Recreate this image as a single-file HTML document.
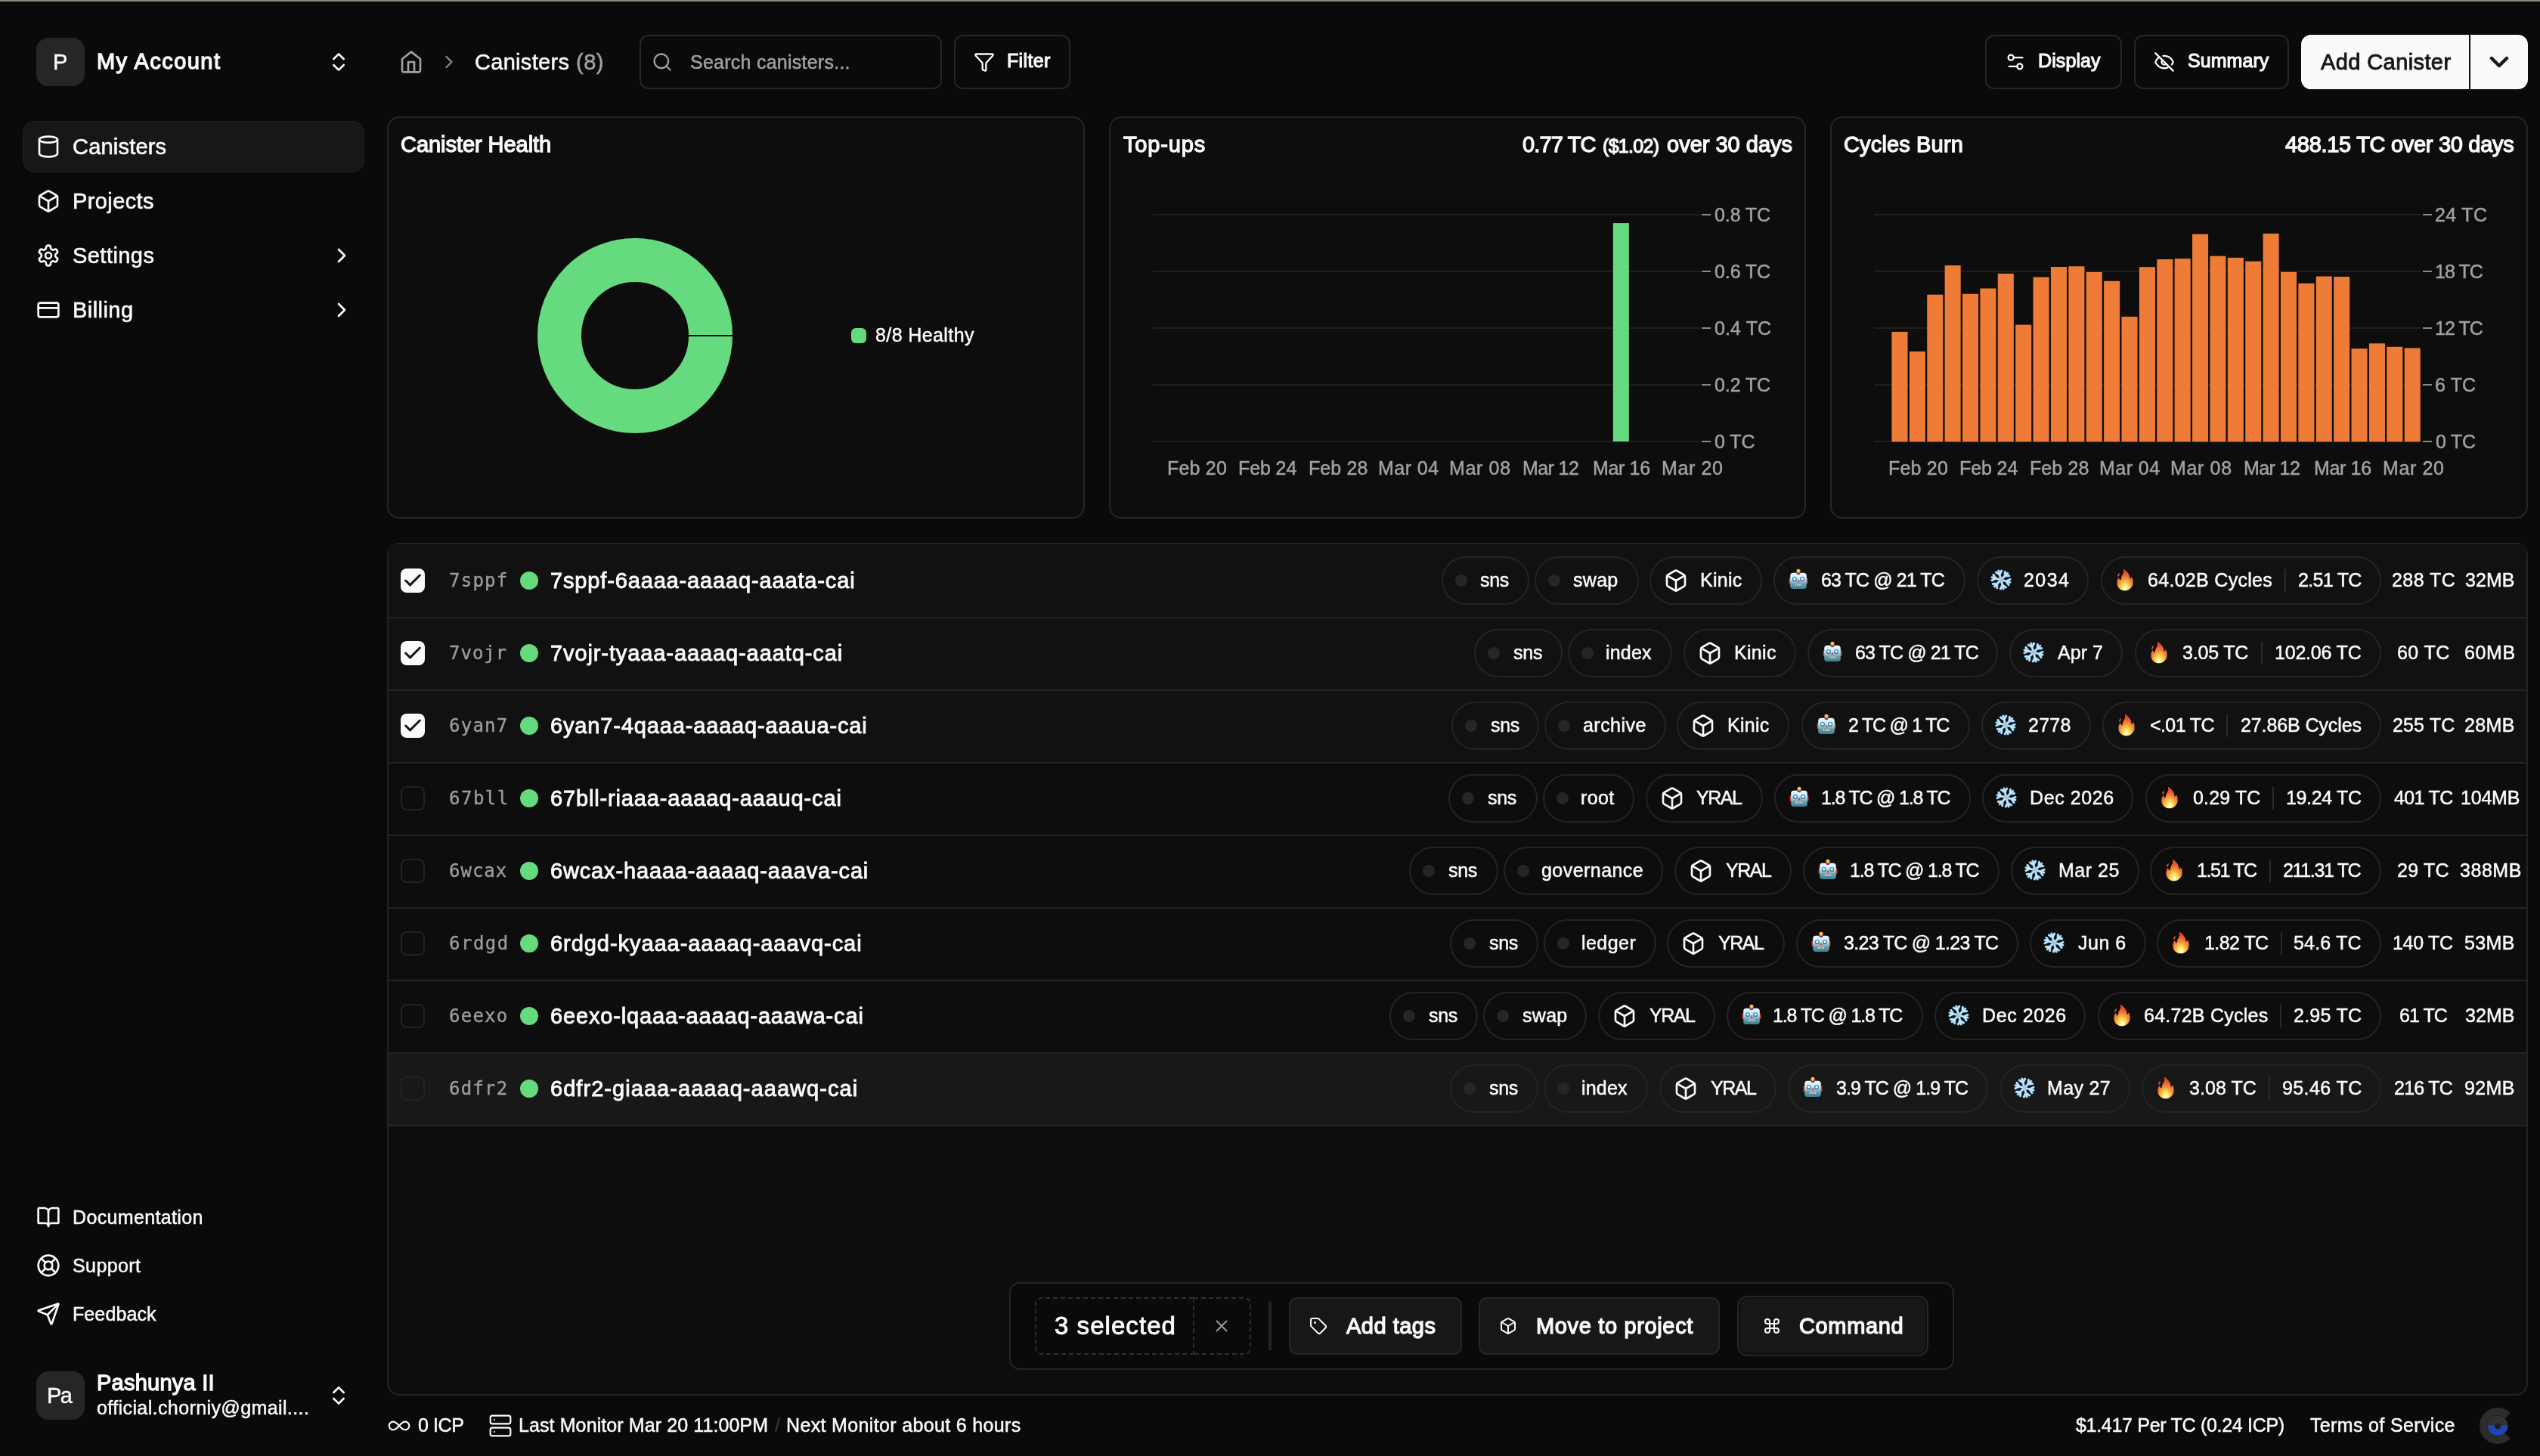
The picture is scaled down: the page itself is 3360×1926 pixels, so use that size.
<!DOCTYPE html>
<html lang="en"><head><meta charset="utf-8"><title>Canisters</title><style>
*{box-sizing:border-box;margin:0;padding:0}
html,body{width:3360px;height:1926px;overflow:hidden;background:#0a0a0a}
body{position:relative;font-family:'Liberation Sans',sans-serif;color:#fafafa}
.b,.i,.t,.s{position:absolute}
.tl{position:absolute;left:0;top:0;width:3360px;height:1926px;will-change:transform}
.t{white-space:pre;font-weight:400}
.m{font-family:'DejaVu Sans Mono','Liberation Mono',monospace}
.bd{font-weight:700}
@media (min-resolution:1.9dppx){html{zoom:.5}}
</style></head>
<body>
<svg class="i" style="left:0;top:0" width="0" height="0" aria-hidden="true"><defs><linearGradient id="rg" x1="0" y1="0" x2="0" y2="1"><stop offset="0" stop-color="#eaf7f9"/><stop offset=".38" stop-color="#d5ecef"/><stop offset=".68" stop-color="#6aa2ae"/><stop offset="1" stop-color="#3a7d93"/></linearGradient><linearGradient id="eg" x1="0" y1="0" x2="0" y2="1"><stop offset="0" stop-color="#3fb0e6"/><stop offset="1" stop-color="#2b74aa"/></linearGradient><radialGradient id="ag" cx=".5" cy=".35" r=".7"><stop offset="0" stop-color="#ffd862"/><stop offset="1" stop-color="#ef9422"/></radialGradient><radialGradient id="fg" cx=".5" cy=".86" r=".8" fx=".5" fy=".9"><stop offset="0" stop-color="#fffdf0"/><stop offset=".14" stop-color="#fff3a0"/><stop offset=".3" stop-color="#fbd64c"/><stop offset=".52" stop-color="#f29a3e"/><stop offset=".78" stop-color="#ee5a2c"/><stop offset="1" stop-color="#e8412a"/></radialGradient></defs></svg>
<div class="b" style="left:0px;top:0px;width:3360px;height:2px;background:#858a7a;"></div>
<div class="b" style="left:48px;top:50px;width:64px;height:64px;background:#262626;border-radius:16px;"></div>
<svg class="i" style="left:432px;top:66px" width="32" height="32" viewBox="0 0 24 24" fill="none" stroke="#fafafa" stroke-width="2" stroke-linecap="round" stroke-linejoin="round" ><path d="m7 15 5 5 5-5"/><path d="m7 9 5-5 5 5"/></svg>
<div class="b" style="left:30px;top:160px;width:452px;height:68px;background:#171717;border-radius:16px;box-shadow:inset 0 0 0 2px #1c1c1c;"></div>
<svg class="i" style="left:48px;top:178px" width="32" height="32" viewBox="0 0 24 24" fill="none" stroke="#fafafa" stroke-width="2" stroke-linecap="round" stroke-linejoin="round" ><ellipse cx="12" cy="5" rx="9" ry="3"/><path d="M3 5v14a9 3 0 0 0 18 0V5"/></svg>
<svg class="i" style="left:48px;top:250px" width="32" height="32" viewBox="0 0 24 24" fill="none" stroke="#fafafa" stroke-width="2" stroke-linecap="round" stroke-linejoin="round" ><path d="M21 8a2 2 0 0 0-1-1.73l-7-4a2 2 0 0 0-2 0l-7 4A2 2 0 0 0 3 8v8a2 2 0 0 0 1 1.73l7 4a2 2 0 0 0 2 0l7-4A2 2 0 0 0 21 16Z"/><path d="m3.3 7 8.7 5 8.7-5"/><path d="M12 22V12"/></svg>
<svg class="i" style="left:48px;top:322px" width="32" height="32" viewBox="0 0 24 24" fill="none" stroke="#fafafa" stroke-width="2" stroke-linecap="round" stroke-linejoin="round" ><path d="M12.22 2h-.44a2 2 0 0 0-2 2v.18a2 2 0 0 1-1 1.73l-.43.25a2 2 0 0 1-2 0l-.15-.08a2 2 0 0 0-2.73.73l-.22.38a2 2 0 0 0 .73 2.73l.15.1a2 2 0 0 1 1 1.72v.51a2 2 0 0 1-1 1.74l-.15.09a2 2 0 0 0-.73 2.73l.22.38a2 2 0 0 0 2.73.73l.15-.08a2 2 0 0 1 2 0l.43.25a2 2 0 0 1 1 1.73V20a2 2 0 0 0 2 2h.44a2 2 0 0 0 2-2v-.18a2 2 0 0 1 1-1.73l.43-.25a2 2 0 0 1 2 0l.15.08a2 2 0 0 0 2.73-.73l.22-.39a2 2 0 0 0-.73-2.73l-.15-.08a2 2 0 0 1-1-1.74v-.5a2 2 0 0 1 1-1.74l.15-.09a2 2 0 0 0 .73-2.73l-.22-.38a2 2 0 0 0-2.73-.73l-.15.08a2 2 0 0 1-2 0l-.43-.25a2 2 0 0 1-1-1.73V4a2 2 0 0 0-2-2z"/><circle cx="12" cy="12" r="3"/></svg>
<svg class="i" style="left:436px;top:322px" width="32" height="32" viewBox="0 0 24 24" fill="none" stroke="#fafafa" stroke-width="2" stroke-linecap="round" stroke-linejoin="round" ><path d="m9 18 6-6-6-6"/></svg>
<svg class="i" style="left:48px;top:394px" width="32" height="32" viewBox="0 0 24 24" fill="none" stroke="#fafafa" stroke-width="2" stroke-linecap="round" stroke-linejoin="round" ><rect width="20" height="14" x="2" y="5" rx="2"/><line x1="2" x2="22" y1="10" y2="10"/></svg>
<svg class="i" style="left:436px;top:394px" width="32" height="32" viewBox="0 0 24 24" fill="none" stroke="#fafafa" stroke-width="2" stroke-linecap="round" stroke-linejoin="round" ><path d="m9 18 6-6-6-6"/></svg>
<svg class="i" style="left:48px;top:1594px" width="32" height="32" viewBox="0 0 24 24" fill="none" stroke="#fafafa" stroke-width="2" stroke-linecap="round" stroke-linejoin="round" ><path d="M12 7v14"/><path d="M3 18a1 1 0 0 1-1-1V4a1 1 0 0 1 1-1h5a4 4 0 0 1 4 4 4 4 0 0 1 4-4h5a1 1 0 0 1 1 1v13a1 1 0 0 1-1 1h-6a3 3 0 0 0-3 3 3 3 0 0 0-3-3z"/></svg>
<svg class="i" style="left:48px;top:1658px" width="32" height="32" viewBox="0 0 24 24" fill="none" stroke="#fafafa" stroke-width="2" stroke-linecap="round" stroke-linejoin="round" ><circle cx="12" cy="12" r="10"/><path d="m4.93 4.93 4.24 4.24"/><path d="m14.83 9.17 4.24-4.24"/><path d="m14.83 14.83 4.24 4.24"/><path d="m9.17 14.83-4.24 4.24"/><circle cx="12" cy="12" r="4"/></svg>
<svg class="i" style="left:48px;top:1722px" width="32" height="32" viewBox="0 0 24 24" fill="none" stroke="#fafafa" stroke-width="2" stroke-linecap="round" stroke-linejoin="round" ><path d="M14.536 21.686a.5.5 0 0 0 .937-.024l6.5-19a.496.496 0 0 0-.635-.635l-19 6.5a.5.5 0 0 0-.024.937l7.93 3.18a2 2 0 0 1 1.112 1.11z"/><path d="m21.854 2.147-10.94 10.939"/></svg>
<div class="b" style="left:48px;top:1814px;width:64px;height:64px;background:#262626;border-radius:16px;"></div>
<svg class="i" style="left:432px;top:1830px" width="32" height="32" viewBox="0 0 24 24" fill="none" stroke="#fafafa" stroke-width="2" stroke-linecap="round" stroke-linejoin="round" ><path d="m7 15 5 5 5-5"/><path d="m7 9 5-5 5 5"/></svg>
<svg class="i" style="left:528px;top:66px" width="32" height="32" viewBox="0 0 24 24" fill="none" stroke="#a1a1a1" stroke-width="2" stroke-linecap="round" stroke-linejoin="round" ><path d="m3 9 9-7 9 7v11a2 2 0 0 1-2 2H5a2 2 0 0 1-2-2z"/><polyline points="9 22 9 12 15 12 15 22"/></svg>
<svg class="i" style="left:580px;top:68px" width="28" height="28" viewBox="0 0 24 24" fill="none" stroke="#8a8a8a" stroke-width="2" stroke-linecap="round" stroke-linejoin="round" ><path d="m9 18 6-6-6-6"/></svg>
<div class="b" style="left:846px;top:46px;width:400px;height:72px;border:2px solid #262626;border-radius:12px;"></div>
<svg class="i" style="left:862px;top:68px" width="28" height="28" viewBox="0 0 24 24" fill="none" stroke="#a1a1a1" stroke-width="2" stroke-linecap="round" stroke-linejoin="round" ><circle cx="11" cy="11" r="8"/><path d="m21 21-4.3-4.3"/></svg>
<div class="b" style="left:1262px;top:46px;width:154px;height:72px;border:2px solid #262626;border-radius:12px;"></div>
<svg class="i" style="left:1288px;top:68px" width="28" height="28" viewBox="0 0 24 24" fill="none" stroke="#fafafa" stroke-width="2" stroke-linecap="round" stroke-linejoin="round" ><path d="M10 20a1 1 0 0 0 .553.895l2 1A1 1 0 0 0 14 21v-7a2 2 0 0 1 .517-1.341L21.74 4.67A1 1 0 0 0 21 3H3a1 1 0 0 0-.742 1.67l7.225 7.989A2 2 0 0 1 10 14z"/></svg>
<div class="b" style="left:2626px;top:46px;width:181px;height:72px;border:2px solid #262626;border-radius:12px;"></div>
<svg class="i" style="left:2652px;top:68px" width="28" height="28" viewBox="0 0 24 24" fill="none" stroke="#fafafa" stroke-width="2" stroke-linecap="round" stroke-linejoin="round" ><path d="M20 7h-9"/><path d="M14 17H5"/><circle cx="17" cy="17" r="3"/><circle cx="7" cy="7" r="3"/></svg>
<div class="b" style="left:2823px;top:46px;width:205px;height:72px;border:2px solid #262626;border-radius:12px;"></div>
<svg class="i" style="left:2849px;top:68px" width="28" height="28" viewBox="0 0 24 24" fill="none" stroke="#fafafa" stroke-width="2" stroke-linecap="round" stroke-linejoin="round" ><path d="M10.733 5.076a10.744 10.744 0 0 1 11.205 6.575 1 1 0 0 1 0 .696 10.747 10.747 0 0 1-1.444 2.49"/><path d="M14.084 14.158a3 3 0 0 1-4.242-4.242"/><path d="M17.479 17.499a10.75 10.75 0 0 1-15.417-5.151 1 1 0 0 1 0-.696 10.75 10.75 0 0 1 4.446-5.143"/><path d="m2 2 20 20"/></svg>
<div class="b" style="left:3044px;top:46px;width:222px;height:72px;background:#fafafa;border-radius:13px 0 0 13px;"></div>
<div class="b" style="left:3268px;top:46px;width:76px;height:72px;background:#fafafa;border-radius:0 13px 13px 0;"></div>
<svg class="i" style="left:3286px;top:62px" width="40" height="40" viewBox="0 0 40 40" fill="none" stroke="#171717" stroke-width="4.4" stroke-linecap="round" stroke-linejoin="round"><path d="M10 15 L20 25 L30 15"/></svg>
<div class="b" style="left:512px;top:154px;width:923px;height:532px;background:#0d0d0d;border:2px solid #262626;border-radius:16px;"></div>
<div class="b" style="left:1467px;top:154px;width:922px;height:532px;background:#0d0d0d;border:2px solid #262626;border-radius:16px;"></div>
<div class="b" style="left:2421px;top:154px;width:923px;height:532px;background:#0d0d0d;border:2px solid #262626;border-radius:16px;"></div>
<svg class="i" style="left:700px;top:304px" width="280" height="280" viewBox="-140 -140 280 280">
<circle cx="0" cy="0" r="100" fill="none" stroke="#66da7e" stroke-width="58"/>
<rect x="70" y="-1" width="60" height="2" fill="#0d0d0d"/></svg>
<div class="b" style="left:1126px;top:434px;width:20px;height:20px;background:#66da7e;border-radius:6px;"></div>
<div class="b" style="left:1525px;top:283px;width:724px;height:2px;background:#1f1f1f;"></div>
<div class="b" style="left:2251px;top:283px;width:12px;height:2px;background:#8a8a8a;"></div>
<div class="b" style="left:1525px;top:358px;width:724px;height:2px;background:#1f1f1f;"></div>
<div class="b" style="left:2251px;top:358px;width:12px;height:2px;background:#8a8a8a;"></div>
<div class="b" style="left:1525px;top:433px;width:724px;height:2px;background:#1f1f1f;"></div>
<div class="b" style="left:2251px;top:433px;width:12px;height:2px;background:#8a8a8a;"></div>
<div class="b" style="left:1525px;top:508px;width:724px;height:2px;background:#1f1f1f;"></div>
<div class="b" style="left:2251px;top:508px;width:12px;height:2px;background:#8a8a8a;"></div>
<div class="b" style="left:1525px;top:583px;width:724px;height:2px;background:#1f1f1f;"></div>
<div class="b" style="left:2251px;top:583px;width:12px;height:2px;background:#8a8a8a;"></div>
<svg class="i" style="left:1520px;top:270px" width="740" height="320" viewBox="1520 270 740 320" shape-rendering="auto"><rect x="2133.83" y="295.1" width="21.05" height="288.90" fill="#66da7e"/></svg>
<div class="b" style="left:2479px;top:283px;width:724px;height:2px;background:#1f1f1f;"></div>
<div class="b" style="left:3205px;top:283px;width:12px;height:2px;background:#8a8a8a;"></div>
<div class="b" style="left:2479px;top:358px;width:724px;height:2px;background:#1f1f1f;"></div>
<div class="b" style="left:3205px;top:358px;width:12px;height:2px;background:#8a8a8a;"></div>
<div class="b" style="left:2479px;top:433px;width:724px;height:2px;background:#1f1f1f;"></div>
<div class="b" style="left:3205px;top:433px;width:12px;height:2px;background:#8a8a8a;"></div>
<div class="b" style="left:2479px;top:508px;width:724px;height:2px;background:#1f1f1f;"></div>
<div class="b" style="left:3205px;top:508px;width:12px;height:2px;background:#8a8a8a;"></div>
<div class="b" style="left:2479px;top:583px;width:724px;height:2px;background:#1f1f1f;"></div>
<div class="b" style="left:3205px;top:583px;width:12px;height:2px;background:#8a8a8a;"></div>
<svg class="i" style="left:2470px;top:270px" width="750" height="320" viewBox="2470 270 750 320" fill="#ef7c36"><rect x="2502.46" y="438.9" width="21.05" height="145.40"/><rect x="2525.84" y="464.9" width="21.05" height="119.40"/><rect x="2549.23" y="389.7" width="21.05" height="194.60"/><rect x="2572.62" y="351.1" width="21.05" height="233.20"/><rect x="2596.00" y="388.8" width="21.05" height="195.50"/><rect x="2619.39" y="381.5" width="21.05" height="202.80"/><rect x="2642.78" y="362" width="21.05" height="222.30"/><rect x="2666.17" y="429.6" width="21.05" height="154.70"/><rect x="2689.55" y="366.6" width="21.05" height="217.70"/><rect x="2712.94" y="353" width="21.05" height="231.30"/><rect x="2736.33" y="352.3" width="21.05" height="232.00"/><rect x="2759.71" y="360" width="21.05" height="224.30"/><rect x="2783.10" y="371.8" width="21.05" height="212.50"/><rect x="2806.49" y="418.9" width="21.05" height="165.40"/><rect x="2829.88" y="353.2" width="21.05" height="231.10"/><rect x="2853.26" y="343" width="21.05" height="241.30"/><rect x="2876.65" y="342.1" width="21.05" height="242.20"/><rect x="2900.04" y="309.7" width="21.05" height="274.60"/><rect x="2923.42" y="338.7" width="21.05" height="245.60"/><rect x="2946.81" y="340.9" width="21.05" height="243.40"/><rect x="2970.20" y="345.7" width="21.05" height="238.60"/><rect x="2993.59" y="309" width="21.05" height="275.30"/><rect x="3016.97" y="359.8" width="21.05" height="224.50"/><rect x="3040.36" y="374.9" width="21.05" height="209.40"/><rect x="3063.75" y="365.6" width="21.05" height="218.70"/><rect x="3087.13" y="366.1" width="21.05" height="218.20"/><rect x="3110.52" y="461.1" width="21.05" height="123.20"/><rect x="3133.91" y="454.3" width="21.05" height="130.00"/><rect x="3157.30" y="458.8" width="21.05" height="125.50"/><rect x="3180.68" y="460.4" width="21.05" height="123.90"/></svg>
<div class="b" style="left:512px;top:718px;width:2832px;height:1128px;background:#0d0d0d;border:2px solid #232323;border-radius:16px;overflow:hidden;"></div>
<div class="b" style="left:514px;top:720px;width:2828px;height:96px;background:#111111;"></div>
<div class="b" style="left:514px;top:816px;width:2828px;height:96px;background:#111111;"></div>
<div class="b" style="left:514px;top:912px;width:2828px;height:96px;background:#111111;"></div>
<div class="b" style="left:514px;top:1392px;width:2828px;height:96px;background:#181818;"></div>
<div class="b" style="left:514px;top:816px;width:2828px;height:2px;background:#242424;"></div>
<div class="b" style="left:530px;top:752px;width:32px;height:32px;background:#fafafa;border-radius:8px;"></div>
<svg class="i" style="left:532px;top:754px" width="28" height="28" viewBox="0 0 24 24" fill="none" stroke="#171717" stroke-width="2.6" stroke-linecap="round" stroke-linejoin="round"><path d="M20 6 9 17l-5-5"/></svg>
<div class="b" style="left:688px;top:756px;width:24px;height:24px;border-radius:50%;background:#66da7e"></div>
<div class="b" style="left:1907px;top:736px;width:116px;height:64px;border:2px solid #242424;border-radius:32px;"></div>
<div class="b" style="left:1925px;top:760px;width:16px;height:16px;border-radius:50%;background:#262626"></div>
<div class="b" style="left:2030px;top:736px;width:138px;height:64px;border:2px solid #242424;border-radius:32px;"></div>
<div class="b" style="left:2048px;top:760px;width:16px;height:16px;border-radius:50%;background:#262626"></div>
<div class="b" style="left:2182px;top:736px;width:149px;height:64px;border:2px solid #242424;border-radius:32px;"></div>
<svg class="i" style="left:2201px;top:752px" width="32" height="32" viewBox="0 0 24 24" fill="none" stroke="#fafafa" stroke-width="2" stroke-linecap="round" stroke-linejoin="round" ><path d="M21 8a2 2 0 0 0-1-1.73l-7-4a2 2 0 0 0-2 0l-7 4A2 2 0 0 0 3 8v8a2 2 0 0 0 1 1.73l7 4a2 2 0 0 0 2 0l7-4A2 2 0 0 0 21 16Z"/><path d="m3.3 7 8.7 5 8.7-5"/><path d="M12 22V12"/></svg>
<div class="b" style="left:2346px;top:736px;width:254px;height:64px;border:2px solid #242424;border-radius:32px;"></div>
<svg class="i" style="left:2364.7px;top:752px" width="28" height="30" viewBox="0 0 28 30">
<rect x="1.6" y="12.4" width="2.6" height="7.6" rx="1.1" fill="#d63a2c"/><rect x="23.8" y="12.4" width="2.6" height="7.6" rx="1.1" fill="#d63a2c"/>
<rect x="3.2" y="5.8" width="21.6" height="21.2" rx="3.8" fill="url(#rg)"/>
<path d="M11.4 5.2 H16.6 V6.0 A2.6 2.2 0 0 1 11.4 6.0 Z" fill="#6a3c97"/>
<circle cx="14" cy="3.3" r="2.6" fill="url(#ag)"/>
<circle cx="8.9" cy="13.9" r="3.2" fill="url(#eg)"/><circle cx="19.1" cy="13.9" r="3.2" fill="url(#eg)"/>
<circle cx="8.9" cy="13.9" r="1.7" fill="#fff"/><circle cx="19.1" cy="13.9" r="1.7" fill="#fff"/>
<path d="M14 14.2 L16.0 18.2 L12.0 18.2 Z" fill="#db4a4c"/>
<rect x="9.8" y="20.3" width="8.4" height="2.7" rx="1" fill="#e4e4e4"/>
<path d="M11.5 20.3v2.7M13.2 20.3v2.7M14.9 20.3v2.7M16.6 20.3v2.7" stroke="#5c5c5c" stroke-width=".7"/>
</svg>
<div class="b" style="left:2615px;top:736px;width:148px;height:64px;border:2px solid #242424;border-radius:32px;"></div>
<svg class="i" style="left:2632.6px;top:753px" width="28" height="28" viewBox="0 0 28 28">
<path d="M14 14L25.88 17.18M20.95 15.86L25.94 13.32M20.95 15.86L24.00 20.56M14 14L17.18 25.88M15.86 20.95L20.56 24.00M15.86 20.95L13.32 25.94M14 14L5.30 22.70M8.91 19.09L8.62 24.68M8.91 19.09L3.32 19.38M14 14L2.12 10.82M7.05 12.14L2.06 14.68M7.05 12.14L4.00 7.44M14 14L10.82 2.12M12.14 7.05L7.44 4.00M12.14 7.05L14.68 2.06M14 14L22.70 5.30M19.09 8.91L19.38 3.32M19.09 8.91L24.68 8.62" stroke="#8cc6f0" stroke-width="3.2" stroke-linecap="round" fill="none"/>
<path d="M14 14L25.88 17.18M20.95 15.86L25.94 13.32M20.95 15.86L24.00 20.56M14 14L17.18 25.88M15.86 20.95L20.56 24.00M15.86 20.95L13.32 25.94M14 14L5.30 22.70M8.91 19.09L8.62 24.68M8.91 19.09L3.32 19.38M14 14L2.12 10.82M7.05 12.14L2.06 14.68M7.05 12.14L4.00 7.44M14 14L10.82 2.12M12.14 7.05L7.44 4.00M12.14 7.05L14.68 2.06M14 14L22.70 5.30M19.09 8.91L19.38 3.32M19.09 8.91L24.68 8.62" stroke="#c4e9fb" stroke-width="1.7" stroke-linecap="round" fill="none"/>
<circle cx="14" cy="14" r="2.2" fill="#b5bfc8"/></svg>
<div class="b" style="left:2779px;top:736px;width:371px;height:64px;border:2px solid #242424;border-radius:32px;"></div>
<svg class="i" style="left:2799.2px;top:752px" width="24" height="31" viewBox="0 0 25 31" preserveAspectRatio="none">
<path d="M11.0 1.0 C11.6 1.2 13.5 2.6 15.6 4.8 C18.3 7.6 19.3 10.6 19.2 13.4 C19.7 13.9 20.6 13.4 21.3 12.0 C21.6 11.4 22.2 11.5 22.5 12.2 C23.4 14.3 23.9 16.6 23.6 19.4 C23.1 24.5 18.7 29.2 12.6 29.3 C6.6 29.4 2.0 25.4 1.5 20.2 C1.2 17.0 2.1 14.3 3.4 12.6 C3.8 12.1 4.4 12.3 4.5 12.9 C4.7 14.0 5.2 15.0 6.0 15.3 C6.8 15.3 7.0 14.4 7.2 13.4 C7.7 10.2 9.0 8.0 10.2 6.4 C11.0 5.2 10.6 2.8 10.3 1.6 C10.2 1.2 10.6 0.9 11.0 1.0 Z" fill="url(#fg)"/>
<path d="M4.6 6.0 C5.2 7.3 4.8 9.2 3.5 10.6 C2.6 11.0 2.0 10.4 2.3 9.4 C2.8 7.9 3.7 6.6 4.6 6.0 Z" fill="#ee5b32"/>
</svg>
<div class="b" style="left:3022px;top:753px;width:2px;height:30px;background:#2a2a2a;"></div>
<div class="b" style="left:514px;top:912px;width:2828px;height:2px;background:#242424;"></div>
<div class="b" style="left:530px;top:848px;width:32px;height:32px;background:#fafafa;border-radius:8px;"></div>
<svg class="i" style="left:532px;top:850px" width="28" height="28" viewBox="0 0 24 24" fill="none" stroke="#171717" stroke-width="2.6" stroke-linecap="round" stroke-linejoin="round"><path d="M20 6 9 17l-5-5"/></svg>
<div class="b" style="left:688px;top:852px;width:24px;height:24px;border-radius:50%;background:#66da7e"></div>
<div class="b" style="left:1950px;top:832px;width:117px;height:64px;border:2px solid #242424;border-radius:32px;"></div>
<div class="b" style="left:1968px;top:856px;width:16px;height:16px;border-radius:50%;background:#262626"></div>
<div class="b" style="left:2074px;top:832px;width:138px;height:64px;border:2px solid #242424;border-radius:32px;"></div>
<div class="b" style="left:2092px;top:856px;width:16px;height:16px;border-radius:50%;background:#262626"></div>
<div class="b" style="left:2227px;top:832px;width:149px;height:64px;border:2px solid #242424;border-radius:32px;"></div>
<svg class="i" style="left:2246px;top:848px" width="32" height="32" viewBox="0 0 24 24" fill="none" stroke="#fafafa" stroke-width="2" stroke-linecap="round" stroke-linejoin="round" ><path d="M21 8a2 2 0 0 0-1-1.73l-7-4a2 2 0 0 0-2 0l-7 4A2 2 0 0 0 3 8v8a2 2 0 0 0 1 1.73l7 4a2 2 0 0 0 2 0l7-4A2 2 0 0 0 21 16Z"/><path d="m3.3 7 8.7 5 8.7-5"/><path d="M12 22V12"/></svg>
<div class="b" style="left:2391px;top:832px;width:252px;height:64px;border:2px solid #242424;border-radius:32px;"></div>
<svg class="i" style="left:2409.7px;top:848px" width="28" height="30" viewBox="0 0 28 30">
<rect x="1.6" y="12.4" width="2.6" height="7.6" rx="1.1" fill="#d63a2c"/><rect x="23.8" y="12.4" width="2.6" height="7.6" rx="1.1" fill="#d63a2c"/>
<rect x="3.2" y="5.8" width="21.6" height="21.2" rx="3.8" fill="url(#rg)"/>
<path d="M11.4 5.2 H16.6 V6.0 A2.6 2.2 0 0 1 11.4 6.0 Z" fill="#6a3c97"/>
<circle cx="14" cy="3.3" r="2.6" fill="url(#ag)"/>
<circle cx="8.9" cy="13.9" r="3.2" fill="url(#eg)"/><circle cx="19.1" cy="13.9" r="3.2" fill="url(#eg)"/>
<circle cx="8.9" cy="13.9" r="1.7" fill="#fff"/><circle cx="19.1" cy="13.9" r="1.7" fill="#fff"/>
<path d="M14 14.2 L16.0 18.2 L12.0 18.2 Z" fill="#db4a4c"/>
<rect x="9.8" y="20.3" width="8.4" height="2.7" rx="1" fill="#e4e4e4"/>
<path d="M11.5 20.3v2.7M13.2 20.3v2.7M14.9 20.3v2.7M16.6 20.3v2.7" stroke="#5c5c5c" stroke-width=".7"/>
</svg>
<div class="b" style="left:2658px;top:832px;width:150px;height:64px;border:2px solid #242424;border-radius:32px;"></div>
<svg class="i" style="left:2675.6px;top:849px" width="28" height="28" viewBox="0 0 28 28">
<path d="M14 14L25.88 17.18M20.95 15.86L25.94 13.32M20.95 15.86L24.00 20.56M14 14L17.18 25.88M15.86 20.95L20.56 24.00M15.86 20.95L13.32 25.94M14 14L5.30 22.70M8.91 19.09L8.62 24.68M8.91 19.09L3.32 19.38M14 14L2.12 10.82M7.05 12.14L2.06 14.68M7.05 12.14L4.00 7.44M14 14L10.82 2.12M12.14 7.05L7.44 4.00M12.14 7.05L14.68 2.06M14 14L22.70 5.30M19.09 8.91L19.38 3.32M19.09 8.91L24.68 8.62" stroke="#8cc6f0" stroke-width="3.2" stroke-linecap="round" fill="none"/>
<path d="M14 14L25.88 17.18M20.95 15.86L25.94 13.32M20.95 15.86L24.00 20.56M14 14L17.18 25.88M15.86 20.95L20.56 24.00M15.86 20.95L13.32 25.94M14 14L5.30 22.70M8.91 19.09L8.62 24.68M8.91 19.09L3.32 19.38M14 14L2.12 10.82M7.05 12.14L2.06 14.68M7.05 12.14L4.00 7.44M14 14L10.82 2.12M12.14 7.05L7.44 4.00M12.14 7.05L14.68 2.06M14 14L22.70 5.30M19.09 8.91L19.38 3.32M19.09 8.91L24.68 8.62" stroke="#c4e9fb" stroke-width="1.7" stroke-linecap="round" fill="none"/>
<circle cx="14" cy="14" r="2.2" fill="#b5bfc8"/></svg>
<div class="b" style="left:2824px;top:832px;width:326px;height:64px;border:2px solid #242424;border-radius:32px;"></div>
<svg class="i" style="left:2844.2px;top:848px" width="24" height="31" viewBox="0 0 25 31" preserveAspectRatio="none">
<path d="M11.0 1.0 C11.6 1.2 13.5 2.6 15.6 4.8 C18.3 7.6 19.3 10.6 19.2 13.4 C19.7 13.9 20.6 13.4 21.3 12.0 C21.6 11.4 22.2 11.5 22.5 12.2 C23.4 14.3 23.9 16.6 23.6 19.4 C23.1 24.5 18.7 29.2 12.6 29.3 C6.6 29.4 2.0 25.4 1.5 20.2 C1.2 17.0 2.1 14.3 3.4 12.6 C3.8 12.1 4.4 12.3 4.5 12.9 C4.7 14.0 5.2 15.0 6.0 15.3 C6.8 15.3 7.0 14.4 7.2 13.4 C7.7 10.2 9.0 8.0 10.2 6.4 C11.0 5.2 10.6 2.8 10.3 1.6 C10.2 1.2 10.6 0.9 11.0 1.0 Z" fill="url(#fg)"/>
<path d="M4.6 6.0 C5.2 7.3 4.8 9.2 3.5 10.6 C2.6 11.0 2.0 10.4 2.3 9.4 C2.8 7.9 3.7 6.6 4.6 6.0 Z" fill="#ee5b32"/>
</svg>
<div class="b" style="left:2991px;top:849px;width:2px;height:30px;background:#2a2a2a;"></div>
<div class="b" style="left:514px;top:1008px;width:2828px;height:2px;background:#242424;"></div>
<div class="b" style="left:530px;top:944px;width:32px;height:32px;background:#fafafa;border-radius:8px;"></div>
<svg class="i" style="left:532px;top:946px" width="28" height="28" viewBox="0 0 24 24" fill="none" stroke="#171717" stroke-width="2.6" stroke-linecap="round" stroke-linejoin="round"><path d="M20 6 9 17l-5-5"/></svg>
<div class="b" style="left:688px;top:948px;width:24px;height:24px;border-radius:50%;background:#66da7e"></div>
<div class="b" style="left:1920px;top:928px;width:116px;height:64px;border:2px solid #242424;border-radius:32px;"></div>
<div class="b" style="left:1938px;top:952px;width:16px;height:16px;border-radius:50%;background:#262626"></div>
<div class="b" style="left:2043px;top:928px;width:161px;height:64px;border:2px solid #242424;border-radius:32px;"></div>
<div class="b" style="left:2061px;top:952px;width:16px;height:16px;border-radius:50%;background:#262626"></div>
<div class="b" style="left:2218px;top:928px;width:149px;height:64px;border:2px solid #242424;border-radius:32px;"></div>
<svg class="i" style="left:2237px;top:944px" width="32" height="32" viewBox="0 0 24 24" fill="none" stroke="#fafafa" stroke-width="2" stroke-linecap="round" stroke-linejoin="round" ><path d="M21 8a2 2 0 0 0-1-1.73l-7-4a2 2 0 0 0-2 0l-7 4A2 2 0 0 0 3 8v8a2 2 0 0 0 1 1.73l7 4a2 2 0 0 0 2 0l7-4A2 2 0 0 0 21 16Z"/><path d="m3.3 7 8.7 5 8.7-5"/><path d="M12 22V12"/></svg>
<div class="b" style="left:2383px;top:928px;width:223px;height:64px;border:2px solid #242424;border-radius:32px;"></div>
<svg class="i" style="left:2401.7px;top:944px" width="28" height="30" viewBox="0 0 28 30">
<rect x="1.6" y="12.4" width="2.6" height="7.6" rx="1.1" fill="#d63a2c"/><rect x="23.8" y="12.4" width="2.6" height="7.6" rx="1.1" fill="#d63a2c"/>
<rect x="3.2" y="5.8" width="21.6" height="21.2" rx="3.8" fill="url(#rg)"/>
<path d="M11.4 5.2 H16.6 V6.0 A2.6 2.2 0 0 1 11.4 6.0 Z" fill="#6a3c97"/>
<circle cx="14" cy="3.3" r="2.6" fill="url(#ag)"/>
<circle cx="8.9" cy="13.9" r="3.2" fill="url(#eg)"/><circle cx="19.1" cy="13.9" r="3.2" fill="url(#eg)"/>
<circle cx="8.9" cy="13.9" r="1.7" fill="#fff"/><circle cx="19.1" cy="13.9" r="1.7" fill="#fff"/>
<path d="M14 14.2 L16.0 18.2 L12.0 18.2 Z" fill="#db4a4c"/>
<rect x="9.8" y="20.3" width="8.4" height="2.7" rx="1" fill="#e4e4e4"/>
<path d="M11.5 20.3v2.7M13.2 20.3v2.7M14.9 20.3v2.7M16.6 20.3v2.7" stroke="#5c5c5c" stroke-width=".7"/>
</svg>
<div class="b" style="left:2621px;top:928px;width:145px;height:64px;border:2px solid #242424;border-radius:32px;"></div>
<svg class="i" style="left:2638.6px;top:945px" width="28" height="28" viewBox="0 0 28 28">
<path d="M14 14L25.88 17.18M20.95 15.86L25.94 13.32M20.95 15.86L24.00 20.56M14 14L17.18 25.88M15.86 20.95L20.56 24.00M15.86 20.95L13.32 25.94M14 14L5.30 22.70M8.91 19.09L8.62 24.68M8.91 19.09L3.32 19.38M14 14L2.12 10.82M7.05 12.14L2.06 14.68M7.05 12.14L4.00 7.44M14 14L10.82 2.12M12.14 7.05L7.44 4.00M12.14 7.05L14.68 2.06M14 14L22.70 5.30M19.09 8.91L19.38 3.32M19.09 8.91L24.68 8.62" stroke="#8cc6f0" stroke-width="3.2" stroke-linecap="round" fill="none"/>
<path d="M14 14L25.88 17.18M20.95 15.86L25.94 13.32M20.95 15.86L24.00 20.56M14 14L17.18 25.88M15.86 20.95L20.56 24.00M15.86 20.95L13.32 25.94M14 14L5.30 22.70M8.91 19.09L8.62 24.68M8.91 19.09L3.32 19.38M14 14L2.12 10.82M7.05 12.14L2.06 14.68M7.05 12.14L4.00 7.44M14 14L10.82 2.12M12.14 7.05L7.44 4.00M12.14 7.05L14.68 2.06M14 14L22.70 5.30M19.09 8.91L19.38 3.32M19.09 8.91L24.68 8.62" stroke="#c4e9fb" stroke-width="1.7" stroke-linecap="round" fill="none"/>
<circle cx="14" cy="14" r="2.2" fill="#b5bfc8"/></svg>
<div class="b" style="left:2781px;top:928px;width:369px;height:64px;border:2px solid #242424;border-radius:32px;"></div>
<svg class="i" style="left:2801.2px;top:944px" width="24" height="31" viewBox="0 0 25 31" preserveAspectRatio="none">
<path d="M11.0 1.0 C11.6 1.2 13.5 2.6 15.6 4.8 C18.3 7.6 19.3 10.6 19.2 13.4 C19.7 13.9 20.6 13.4 21.3 12.0 C21.6 11.4 22.2 11.5 22.5 12.2 C23.4 14.3 23.9 16.6 23.6 19.4 C23.1 24.5 18.7 29.2 12.6 29.3 C6.6 29.4 2.0 25.4 1.5 20.2 C1.2 17.0 2.1 14.3 3.4 12.6 C3.8 12.1 4.4 12.3 4.5 12.9 C4.7 14.0 5.2 15.0 6.0 15.3 C6.8 15.3 7.0 14.4 7.2 13.4 C7.7 10.2 9.0 8.0 10.2 6.4 C11.0 5.2 10.6 2.8 10.3 1.6 C10.2 1.2 10.6 0.9 11.0 1.0 Z" fill="url(#fg)"/>
<path d="M4.6 6.0 C5.2 7.3 4.8 9.2 3.5 10.6 C2.6 11.0 2.0 10.4 2.3 9.4 C2.8 7.9 3.7 6.6 4.6 6.0 Z" fill="#ee5b32"/>
</svg>
<div class="b" style="left:2945px;top:945px;width:2px;height:30px;background:#2a2a2a;"></div>
<div class="b" style="left:514px;top:1104px;width:2828px;height:2px;background:#242424;"></div>
<div class="b" style="left:530px;top:1040px;width:32px;height:32px;border:2px solid #222222;border-radius:8px;"></div>
<div class="b" style="left:688px;top:1044px;width:24px;height:24px;border-radius:50%;background:#66da7e"></div>
<div class="b" style="left:1916px;top:1024px;width:118px;height:64px;border:2px solid #242424;border-radius:32px;"></div>
<div class="b" style="left:1934px;top:1048px;width:16px;height:16px;border-radius:50%;background:#262626"></div>
<div class="b" style="left:2041px;top:1024px;width:121px;height:64px;border:2px solid #242424;border-radius:32px;"></div>
<div class="b" style="left:2059px;top:1048px;width:16px;height:16px;border-radius:50%;background:#262626"></div>
<div class="b" style="left:2177px;top:1024px;width:155px;height:64px;border:2px solid #242424;border-radius:32px;"></div>
<svg class="i" style="left:2196px;top:1040px" width="32" height="32" viewBox="0 0 24 24" fill="none" stroke="#fafafa" stroke-width="2" stroke-linecap="round" stroke-linejoin="round" ><path d="M21 8a2 2 0 0 0-1-1.73l-7-4a2 2 0 0 0-2 0l-7 4A2 2 0 0 0 3 8v8a2 2 0 0 0 1 1.73l7 4a2 2 0 0 0 2 0l7-4A2 2 0 0 0 21 16Z"/><path d="m3.3 7 8.7 5 8.7-5"/><path d="M12 22V12"/></svg>
<div class="b" style="left:2347px;top:1024px;width:260px;height:64px;border:2px solid #242424;border-radius:32px;"></div>
<svg class="i" style="left:2365.7px;top:1040px" width="28" height="30" viewBox="0 0 28 30">
<rect x="1.6" y="12.4" width="2.6" height="7.6" rx="1.1" fill="#d63a2c"/><rect x="23.8" y="12.4" width="2.6" height="7.6" rx="1.1" fill="#d63a2c"/>
<rect x="3.2" y="5.8" width="21.6" height="21.2" rx="3.8" fill="url(#rg)"/>
<path d="M11.4 5.2 H16.6 V6.0 A2.6 2.2 0 0 1 11.4 6.0 Z" fill="#6a3c97"/>
<circle cx="14" cy="3.3" r="2.6" fill="url(#ag)"/>
<circle cx="8.9" cy="13.9" r="3.2" fill="url(#eg)"/><circle cx="19.1" cy="13.9" r="3.2" fill="url(#eg)"/>
<circle cx="8.9" cy="13.9" r="1.7" fill="#fff"/><circle cx="19.1" cy="13.9" r="1.7" fill="#fff"/>
<path d="M14 14.2 L16.0 18.2 L12.0 18.2 Z" fill="#db4a4c"/>
<rect x="9.8" y="20.3" width="8.4" height="2.7" rx="1" fill="#e4e4e4"/>
<path d="M11.5 20.3v2.7M13.2 20.3v2.7M14.9 20.3v2.7M16.6 20.3v2.7" stroke="#5c5c5c" stroke-width=".7"/>
</svg>
<div class="b" style="left:2622px;top:1024px;width:200px;height:64px;border:2px solid #242424;border-radius:32px;"></div>
<svg class="i" style="left:2639.6px;top:1041px" width="28" height="28" viewBox="0 0 28 28">
<path d="M14 14L25.88 17.18M20.95 15.86L25.94 13.32M20.95 15.86L24.00 20.56M14 14L17.18 25.88M15.86 20.95L20.56 24.00M15.86 20.95L13.32 25.94M14 14L5.30 22.70M8.91 19.09L8.62 24.68M8.91 19.09L3.32 19.38M14 14L2.12 10.82M7.05 12.14L2.06 14.68M7.05 12.14L4.00 7.44M14 14L10.82 2.12M12.14 7.05L7.44 4.00M12.14 7.05L14.68 2.06M14 14L22.70 5.30M19.09 8.91L19.38 3.32M19.09 8.91L24.68 8.62" stroke="#8cc6f0" stroke-width="3.2" stroke-linecap="round" fill="none"/>
<path d="M14 14L25.88 17.18M20.95 15.86L25.94 13.32M20.95 15.86L24.00 20.56M14 14L17.18 25.88M15.86 20.95L20.56 24.00M15.86 20.95L13.32 25.94M14 14L5.30 22.70M8.91 19.09L8.62 24.68M8.91 19.09L3.32 19.38M14 14L2.12 10.82M7.05 12.14L2.06 14.68M7.05 12.14L4.00 7.44M14 14L10.82 2.12M12.14 7.05L7.44 4.00M12.14 7.05L14.68 2.06M14 14L22.70 5.30M19.09 8.91L19.38 3.32M19.09 8.91L24.68 8.62" stroke="#c4e9fb" stroke-width="1.7" stroke-linecap="round" fill="none"/>
<circle cx="14" cy="14" r="2.2" fill="#b5bfc8"/></svg>
<div class="b" style="left:2838px;top:1024px;width:312px;height:64px;border:2px solid #242424;border-radius:32px;"></div>
<svg class="i" style="left:2858.2px;top:1040px" width="24" height="31" viewBox="0 0 25 31" preserveAspectRatio="none">
<path d="M11.0 1.0 C11.6 1.2 13.5 2.6 15.6 4.8 C18.3 7.6 19.3 10.6 19.2 13.4 C19.7 13.9 20.6 13.4 21.3 12.0 C21.6 11.4 22.2 11.5 22.5 12.2 C23.4 14.3 23.9 16.6 23.6 19.4 C23.1 24.5 18.7 29.2 12.6 29.3 C6.6 29.4 2.0 25.4 1.5 20.2 C1.2 17.0 2.1 14.3 3.4 12.6 C3.8 12.1 4.4 12.3 4.5 12.9 C4.7 14.0 5.2 15.0 6.0 15.3 C6.8 15.3 7.0 14.4 7.2 13.4 C7.7 10.2 9.0 8.0 10.2 6.4 C11.0 5.2 10.6 2.8 10.3 1.6 C10.2 1.2 10.6 0.9 11.0 1.0 Z" fill="url(#fg)"/>
<path d="M4.6 6.0 C5.2 7.3 4.8 9.2 3.5 10.6 C2.6 11.0 2.0 10.4 2.3 9.4 C2.8 7.9 3.7 6.6 4.6 6.0 Z" fill="#ee5b32"/>
</svg>
<div class="b" style="left:3006px;top:1041px;width:2px;height:30px;background:#2a2a2a;"></div>
<div class="b" style="left:514px;top:1200px;width:2828px;height:2px;background:#242424;"></div>
<div class="b" style="left:530px;top:1136px;width:32px;height:32px;border:2px solid #222222;border-radius:8px;"></div>
<div class="b" style="left:688px;top:1140px;width:24px;height:24px;border-radius:50%;background:#66da7e"></div>
<div class="b" style="left:1864px;top:1120px;width:118px;height:64px;border:2px solid #242424;border-radius:32px;"></div>
<div class="b" style="left:1882px;top:1144px;width:16px;height:16px;border-radius:50%;background:#262626"></div>
<div class="b" style="left:1989px;top:1120px;width:211px;height:64px;border:2px solid #242424;border-radius:32px;"></div>
<div class="b" style="left:2007px;top:1144px;width:16px;height:16px;border-radius:50%;background:#262626"></div>
<div class="b" style="left:2215px;top:1120px;width:155px;height:64px;border:2px solid #242424;border-radius:32px;"></div>
<svg class="i" style="left:2234px;top:1136px" width="32" height="32" viewBox="0 0 24 24" fill="none" stroke="#fafafa" stroke-width="2" stroke-linecap="round" stroke-linejoin="round" ><path d="M21 8a2 2 0 0 0-1-1.73l-7-4a2 2 0 0 0-2 0l-7 4A2 2 0 0 0 3 8v8a2 2 0 0 0 1 1.73l7 4a2 2 0 0 0 2 0l7-4A2 2 0 0 0 21 16Z"/><path d="m3.3 7 8.7 5 8.7-5"/><path d="M12 22V12"/></svg>
<div class="b" style="left:2385px;top:1120px;width:260px;height:64px;border:2px solid #242424;border-radius:32px;"></div>
<svg class="i" style="left:2403.7px;top:1136px" width="28" height="30" viewBox="0 0 28 30">
<rect x="1.6" y="12.4" width="2.6" height="7.6" rx="1.1" fill="#d63a2c"/><rect x="23.8" y="12.4" width="2.6" height="7.6" rx="1.1" fill="#d63a2c"/>
<rect x="3.2" y="5.8" width="21.6" height="21.2" rx="3.8" fill="url(#rg)"/>
<path d="M11.4 5.2 H16.6 V6.0 A2.6 2.2 0 0 1 11.4 6.0 Z" fill="#6a3c97"/>
<circle cx="14" cy="3.3" r="2.6" fill="url(#ag)"/>
<circle cx="8.9" cy="13.9" r="3.2" fill="url(#eg)"/><circle cx="19.1" cy="13.9" r="3.2" fill="url(#eg)"/>
<circle cx="8.9" cy="13.9" r="1.7" fill="#fff"/><circle cx="19.1" cy="13.9" r="1.7" fill="#fff"/>
<path d="M14 14.2 L16.0 18.2 L12.0 18.2 Z" fill="#db4a4c"/>
<rect x="9.8" y="20.3" width="8.4" height="2.7" rx="1" fill="#e4e4e4"/>
<path d="M11.5 20.3v2.7M13.2 20.3v2.7M14.9 20.3v2.7M16.6 20.3v2.7" stroke="#5c5c5c" stroke-width=".7"/>
</svg>
<div class="b" style="left:2660px;top:1120px;width:170px;height:64px;border:2px solid #242424;border-radius:32px;"></div>
<svg class="i" style="left:2677.6px;top:1137px" width="28" height="28" viewBox="0 0 28 28">
<path d="M14 14L25.88 17.18M20.95 15.86L25.94 13.32M20.95 15.86L24.00 20.56M14 14L17.18 25.88M15.86 20.95L20.56 24.00M15.86 20.95L13.32 25.94M14 14L5.30 22.70M8.91 19.09L8.62 24.68M8.91 19.09L3.32 19.38M14 14L2.12 10.82M7.05 12.14L2.06 14.68M7.05 12.14L4.00 7.44M14 14L10.82 2.12M12.14 7.05L7.44 4.00M12.14 7.05L14.68 2.06M14 14L22.70 5.30M19.09 8.91L19.38 3.32M19.09 8.91L24.68 8.62" stroke="#8cc6f0" stroke-width="3.2" stroke-linecap="round" fill="none"/>
<path d="M14 14L25.88 17.18M20.95 15.86L25.94 13.32M20.95 15.86L24.00 20.56M14 14L17.18 25.88M15.86 20.95L20.56 24.00M15.86 20.95L13.32 25.94M14 14L5.30 22.70M8.91 19.09L8.62 24.68M8.91 19.09L3.32 19.38M14 14L2.12 10.82M7.05 12.14L2.06 14.68M7.05 12.14L4.00 7.44M14 14L10.82 2.12M12.14 7.05L7.44 4.00M12.14 7.05L14.68 2.06M14 14L22.70 5.30M19.09 8.91L19.38 3.32M19.09 8.91L24.68 8.62" stroke="#c4e9fb" stroke-width="1.7" stroke-linecap="round" fill="none"/>
<circle cx="14" cy="14" r="2.2" fill="#b5bfc8"/></svg>
<div class="b" style="left:2844px;top:1120px;width:306px;height:64px;border:2px solid #242424;border-radius:32px;"></div>
<svg class="i" style="left:2864.2px;top:1136px" width="24" height="31" viewBox="0 0 25 31" preserveAspectRatio="none">
<path d="M11.0 1.0 C11.6 1.2 13.5 2.6 15.6 4.8 C18.3 7.6 19.3 10.6 19.2 13.4 C19.7 13.9 20.6 13.4 21.3 12.0 C21.6 11.4 22.2 11.5 22.5 12.2 C23.4 14.3 23.9 16.6 23.6 19.4 C23.1 24.5 18.7 29.2 12.6 29.3 C6.6 29.4 2.0 25.4 1.5 20.2 C1.2 17.0 2.1 14.3 3.4 12.6 C3.8 12.1 4.4 12.3 4.5 12.9 C4.7 14.0 5.2 15.0 6.0 15.3 C6.8 15.3 7.0 14.4 7.2 13.4 C7.7 10.2 9.0 8.0 10.2 6.4 C11.0 5.2 10.6 2.8 10.3 1.6 C10.2 1.2 10.6 0.9 11.0 1.0 Z" fill="url(#fg)"/>
<path d="M4.6 6.0 C5.2 7.3 4.8 9.2 3.5 10.6 C2.6 11.0 2.0 10.4 2.3 9.4 C2.8 7.9 3.7 6.6 4.6 6.0 Z" fill="#ee5b32"/>
</svg>
<div class="b" style="left:3002px;top:1137px;width:2px;height:30px;background:#2a2a2a;"></div>
<div class="b" style="left:514px;top:1296px;width:2828px;height:2px;background:#242424;"></div>
<div class="b" style="left:530px;top:1232px;width:32px;height:32px;border:2px solid #222222;border-radius:8px;"></div>
<div class="b" style="left:688px;top:1236px;width:24px;height:24px;border-radius:50%;background:#66da7e"></div>
<div class="b" style="left:1918px;top:1216px;width:117px;height:64px;border:2px solid #242424;border-radius:32px;"></div>
<div class="b" style="left:1936px;top:1240px;width:16px;height:16px;border-radius:50%;background:#262626"></div>
<div class="b" style="left:2042px;top:1216px;width:149px;height:64px;border:2px solid #242424;border-radius:32px;"></div>
<div class="b" style="left:2060px;top:1240px;width:16px;height:16px;border-radius:50%;background:#262626"></div>
<div class="b" style="left:2205px;top:1216px;width:156px;height:64px;border:2px solid #242424;border-radius:32px;"></div>
<svg class="i" style="left:2224px;top:1232px" width="32" height="32" viewBox="0 0 24 24" fill="none" stroke="#fafafa" stroke-width="2" stroke-linecap="round" stroke-linejoin="round" ><path d="M21 8a2 2 0 0 0-1-1.73l-7-4a2 2 0 0 0-2 0l-7 4A2 2 0 0 0 3 8v8a2 2 0 0 0 1 1.73l7 4a2 2 0 0 0 2 0l7-4A2 2 0 0 0 21 16Z"/><path d="m3.3 7 8.7 5 8.7-5"/><path d="M12 22V12"/></svg>
<div class="b" style="left:2376px;top:1216px;width:294px;height:64px;border:2px solid #242424;border-radius:32px;"></div>
<svg class="i" style="left:2394.7px;top:1232px" width="28" height="30" viewBox="0 0 28 30">
<rect x="1.6" y="12.4" width="2.6" height="7.6" rx="1.1" fill="#d63a2c"/><rect x="23.8" y="12.4" width="2.6" height="7.6" rx="1.1" fill="#d63a2c"/>
<rect x="3.2" y="5.8" width="21.6" height="21.2" rx="3.8" fill="url(#rg)"/>
<path d="M11.4 5.2 H16.6 V6.0 A2.6 2.2 0 0 1 11.4 6.0 Z" fill="#6a3c97"/>
<circle cx="14" cy="3.3" r="2.6" fill="url(#ag)"/>
<circle cx="8.9" cy="13.9" r="3.2" fill="url(#eg)"/><circle cx="19.1" cy="13.9" r="3.2" fill="url(#eg)"/>
<circle cx="8.9" cy="13.9" r="1.7" fill="#fff"/><circle cx="19.1" cy="13.9" r="1.7" fill="#fff"/>
<path d="M14 14.2 L16.0 18.2 L12.0 18.2 Z" fill="#db4a4c"/>
<rect x="9.8" y="20.3" width="8.4" height="2.7" rx="1" fill="#e4e4e4"/>
<path d="M11.5 20.3v2.7M13.2 20.3v2.7M14.9 20.3v2.7M16.6 20.3v2.7" stroke="#5c5c5c" stroke-width=".7"/>
</svg>
<div class="b" style="left:2685px;top:1216px;width:154px;height:64px;border:2px solid #242424;border-radius:32px;"></div>
<svg class="i" style="left:2702.6px;top:1233px" width="28" height="28" viewBox="0 0 28 28">
<path d="M14 14L25.88 17.18M20.95 15.86L25.94 13.32M20.95 15.86L24.00 20.56M14 14L17.18 25.88M15.86 20.95L20.56 24.00M15.86 20.95L13.32 25.94M14 14L5.30 22.70M8.91 19.09L8.62 24.68M8.91 19.09L3.32 19.38M14 14L2.12 10.82M7.05 12.14L2.06 14.68M7.05 12.14L4.00 7.44M14 14L10.82 2.12M12.14 7.05L7.44 4.00M12.14 7.05L14.68 2.06M14 14L22.70 5.30M19.09 8.91L19.38 3.32M19.09 8.91L24.68 8.62" stroke="#8cc6f0" stroke-width="3.2" stroke-linecap="round" fill="none"/>
<path d="M14 14L25.88 17.18M20.95 15.86L25.94 13.32M20.95 15.86L24.00 20.56M14 14L17.18 25.88M15.86 20.95L20.56 24.00M15.86 20.95L13.32 25.94M14 14L5.30 22.70M8.91 19.09L8.62 24.68M8.91 19.09L3.32 19.38M14 14L2.12 10.82M7.05 12.14L2.06 14.68M7.05 12.14L4.00 7.44M14 14L10.82 2.12M12.14 7.05L7.44 4.00M12.14 7.05L14.68 2.06M14 14L22.70 5.30M19.09 8.91L19.38 3.32M19.09 8.91L24.68 8.62" stroke="#c4e9fb" stroke-width="1.7" stroke-linecap="round" fill="none"/>
<circle cx="14" cy="14" r="2.2" fill="#b5bfc8"/></svg>
<div class="b" style="left:2853px;top:1216px;width:297px;height:64px;border:2px solid #242424;border-radius:32px;"></div>
<svg class="i" style="left:2873.2px;top:1232px" width="24" height="31" viewBox="0 0 25 31" preserveAspectRatio="none">
<path d="M11.0 1.0 C11.6 1.2 13.5 2.6 15.6 4.8 C18.3 7.6 19.3 10.6 19.2 13.4 C19.7 13.9 20.6 13.4 21.3 12.0 C21.6 11.4 22.2 11.5 22.5 12.2 C23.4 14.3 23.9 16.6 23.6 19.4 C23.1 24.5 18.7 29.2 12.6 29.3 C6.6 29.4 2.0 25.4 1.5 20.2 C1.2 17.0 2.1 14.3 3.4 12.6 C3.8 12.1 4.4 12.3 4.5 12.9 C4.7 14.0 5.2 15.0 6.0 15.3 C6.8 15.3 7.0 14.4 7.2 13.4 C7.7 10.2 9.0 8.0 10.2 6.4 C11.0 5.2 10.6 2.8 10.3 1.6 C10.2 1.2 10.6 0.9 11.0 1.0 Z" fill="url(#fg)"/>
<path d="M4.6 6.0 C5.2 7.3 4.8 9.2 3.5 10.6 C2.6 11.0 2.0 10.4 2.3 9.4 C2.8 7.9 3.7 6.6 4.6 6.0 Z" fill="#ee5b32"/>
</svg>
<div class="b" style="left:3017px;top:1233px;width:2px;height:30px;background:#2a2a2a;"></div>
<div class="b" style="left:514px;top:1392px;width:2828px;height:2px;background:#242424;"></div>
<div class="b" style="left:530px;top:1328px;width:32px;height:32px;border:2px solid #222222;border-radius:8px;"></div>
<div class="b" style="left:688px;top:1332px;width:24px;height:24px;border-radius:50%;background:#66da7e"></div>
<div class="b" style="left:1838px;top:1312px;width:117px;height:64px;border:2px solid #242424;border-radius:32px;"></div>
<div class="b" style="left:1856px;top:1336px;width:16px;height:16px;border-radius:50%;background:#262626"></div>
<div class="b" style="left:1962px;top:1312px;width:137px;height:64px;border:2px solid #242424;border-radius:32px;"></div>
<div class="b" style="left:1980px;top:1336px;width:16px;height:16px;border-radius:50%;background:#262626"></div>
<div class="b" style="left:2114px;top:1312px;width:155px;height:64px;border:2px solid #242424;border-radius:32px;"></div>
<svg class="i" style="left:2133px;top:1328px" width="32" height="32" viewBox="0 0 24 24" fill="none" stroke="#fafafa" stroke-width="2" stroke-linecap="round" stroke-linejoin="round" ><path d="M21 8a2 2 0 0 0-1-1.73l-7-4a2 2 0 0 0-2 0l-7 4A2 2 0 0 0 3 8v8a2 2 0 0 0 1 1.73l7 4a2 2 0 0 0 2 0l7-4A2 2 0 0 0 21 16Z"/><path d="m3.3 7 8.7 5 8.7-5"/><path d="M12 22V12"/></svg>
<div class="b" style="left:2284px;top:1312px;width:260px;height:64px;border:2px solid #242424;border-radius:32px;"></div>
<svg class="i" style="left:2302.7px;top:1328px" width="28" height="30" viewBox="0 0 28 30">
<rect x="1.6" y="12.4" width="2.6" height="7.6" rx="1.1" fill="#d63a2c"/><rect x="23.8" y="12.4" width="2.6" height="7.6" rx="1.1" fill="#d63a2c"/>
<rect x="3.2" y="5.8" width="21.6" height="21.2" rx="3.8" fill="url(#rg)"/>
<path d="M11.4 5.2 H16.6 V6.0 A2.6 2.2 0 0 1 11.4 6.0 Z" fill="#6a3c97"/>
<circle cx="14" cy="3.3" r="2.6" fill="url(#ag)"/>
<circle cx="8.9" cy="13.9" r="3.2" fill="url(#eg)"/><circle cx="19.1" cy="13.9" r="3.2" fill="url(#eg)"/>
<circle cx="8.9" cy="13.9" r="1.7" fill="#fff"/><circle cx="19.1" cy="13.9" r="1.7" fill="#fff"/>
<path d="M14 14.2 L16.0 18.2 L12.0 18.2 Z" fill="#db4a4c"/>
<rect x="9.8" y="20.3" width="8.4" height="2.7" rx="1" fill="#e4e4e4"/>
<path d="M11.5 20.3v2.7M13.2 20.3v2.7M14.9 20.3v2.7M16.6 20.3v2.7" stroke="#5c5c5c" stroke-width=".7"/>
</svg>
<div class="b" style="left:2559px;top:1312px;width:200px;height:64px;border:2px solid #242424;border-radius:32px;"></div>
<svg class="i" style="left:2576.6px;top:1329px" width="28" height="28" viewBox="0 0 28 28">
<path d="M14 14L25.88 17.18M20.95 15.86L25.94 13.32M20.95 15.86L24.00 20.56M14 14L17.18 25.88M15.86 20.95L20.56 24.00M15.86 20.95L13.32 25.94M14 14L5.30 22.70M8.91 19.09L8.62 24.68M8.91 19.09L3.32 19.38M14 14L2.12 10.82M7.05 12.14L2.06 14.68M7.05 12.14L4.00 7.44M14 14L10.82 2.12M12.14 7.05L7.44 4.00M12.14 7.05L14.68 2.06M14 14L22.70 5.30M19.09 8.91L19.38 3.32M19.09 8.91L24.68 8.62" stroke="#8cc6f0" stroke-width="3.2" stroke-linecap="round" fill="none"/>
<path d="M14 14L25.88 17.18M20.95 15.86L25.94 13.32M20.95 15.86L24.00 20.56M14 14L17.18 25.88M15.86 20.95L20.56 24.00M15.86 20.95L13.32 25.94M14 14L5.30 22.70M8.91 19.09L8.62 24.68M8.91 19.09L3.32 19.38M14 14L2.12 10.82M7.05 12.14L2.06 14.68M7.05 12.14L4.00 7.44M14 14L10.82 2.12M12.14 7.05L7.44 4.00M12.14 7.05L14.68 2.06M14 14L22.70 5.30M19.09 8.91L19.38 3.32M19.09 8.91L24.68 8.62" stroke="#c4e9fb" stroke-width="1.7" stroke-linecap="round" fill="none"/>
<circle cx="14" cy="14" r="2.2" fill="#b5bfc8"/></svg>
<div class="b" style="left:2775px;top:1312px;width:375px;height:64px;border:2px solid #242424;border-radius:32px;"></div>
<svg class="i" style="left:2795.2px;top:1328px" width="24" height="31" viewBox="0 0 25 31" preserveAspectRatio="none">
<path d="M11.0 1.0 C11.6 1.2 13.5 2.6 15.6 4.8 C18.3 7.6 19.3 10.6 19.2 13.4 C19.7 13.9 20.6 13.4 21.3 12.0 C21.6 11.4 22.2 11.5 22.5 12.2 C23.4 14.3 23.9 16.6 23.6 19.4 C23.1 24.5 18.7 29.2 12.6 29.3 C6.6 29.4 2.0 25.4 1.5 20.2 C1.2 17.0 2.1 14.3 3.4 12.6 C3.8 12.1 4.4 12.3 4.5 12.9 C4.7 14.0 5.2 15.0 6.0 15.3 C6.8 15.3 7.0 14.4 7.2 13.4 C7.7 10.2 9.0 8.0 10.2 6.4 C11.0 5.2 10.6 2.8 10.3 1.6 C10.2 1.2 10.6 0.9 11.0 1.0 Z" fill="url(#fg)"/>
<path d="M4.6 6.0 C5.2 7.3 4.8 9.2 3.5 10.6 C2.6 11.0 2.0 10.4 2.3 9.4 C2.8 7.9 3.7 6.6 4.6 6.0 Z" fill="#ee5b32"/>
</svg>
<div class="b" style="left:3016px;top:1329px;width:2px;height:30px;background:#2a2a2a;"></div>
<div class="b" style="left:514px;top:1488px;width:2828px;height:2px;background:#242424;"></div>
<div class="b" style="left:530px;top:1424px;width:32px;height:32px;border:2px solid #222222;border-radius:8px;"></div>
<div class="b" style="left:688px;top:1428px;width:24px;height:24px;border-radius:50%;background:#66da7e"></div>
<div class="b" style="left:1918px;top:1408px;width:117px;height:64px;border:2px solid #242424;border-radius:32px;"></div>
<div class="b" style="left:1936px;top:1432px;width:16px;height:16px;border-radius:50%;background:#262626"></div>
<div class="b" style="left:2042px;top:1408px;width:138px;height:64px;border:2px solid #242424;border-radius:32px;"></div>
<div class="b" style="left:2060px;top:1432px;width:16px;height:16px;border-radius:50%;background:#262626"></div>
<div class="b" style="left:2195px;top:1408px;width:155px;height:64px;border:2px solid #242424;border-radius:32px;"></div>
<svg class="i" style="left:2214px;top:1424px" width="32" height="32" viewBox="0 0 24 24" fill="none" stroke="#fafafa" stroke-width="2" stroke-linecap="round" stroke-linejoin="round" ><path d="M21 8a2 2 0 0 0-1-1.73l-7-4a2 2 0 0 0-2 0l-7 4A2 2 0 0 0 3 8v8a2 2 0 0 0 1 1.73l7 4a2 2 0 0 0 2 0l7-4A2 2 0 0 0 21 16Z"/><path d="m3.3 7 8.7 5 8.7-5"/><path d="M12 22V12"/></svg>
<div class="b" style="left:2365px;top:1408px;width:265px;height:64px;border:2px solid #242424;border-radius:32px;"></div>
<svg class="i" style="left:2383.7px;top:1424px" width="28" height="30" viewBox="0 0 28 30">
<rect x="1.6" y="12.4" width="2.6" height="7.6" rx="1.1" fill="#d63a2c"/><rect x="23.8" y="12.4" width="2.6" height="7.6" rx="1.1" fill="#d63a2c"/>
<rect x="3.2" y="5.8" width="21.6" height="21.2" rx="3.8" fill="url(#rg)"/>
<path d="M11.4 5.2 H16.6 V6.0 A2.6 2.2 0 0 1 11.4 6.0 Z" fill="#6a3c97"/>
<circle cx="14" cy="3.3" r="2.6" fill="url(#ag)"/>
<circle cx="8.9" cy="13.9" r="3.2" fill="url(#eg)"/><circle cx="19.1" cy="13.9" r="3.2" fill="url(#eg)"/>
<circle cx="8.9" cy="13.9" r="1.7" fill="#fff"/><circle cx="19.1" cy="13.9" r="1.7" fill="#fff"/>
<path d="M14 14.2 L16.0 18.2 L12.0 18.2 Z" fill="#db4a4c"/>
<rect x="9.8" y="20.3" width="8.4" height="2.7" rx="1" fill="#e4e4e4"/>
<path d="M11.5 20.3v2.7M13.2 20.3v2.7M14.9 20.3v2.7M16.6 20.3v2.7" stroke="#5c5c5c" stroke-width=".7"/>
</svg>
<div class="b" style="left:2646px;top:1408px;width:172px;height:64px;border:2px solid #242424;border-radius:32px;"></div>
<svg class="i" style="left:2663.6px;top:1425px" width="28" height="28" viewBox="0 0 28 28">
<path d="M14 14L25.88 17.18M20.95 15.86L25.94 13.32M20.95 15.86L24.00 20.56M14 14L17.18 25.88M15.86 20.95L20.56 24.00M15.86 20.95L13.32 25.94M14 14L5.30 22.70M8.91 19.09L8.62 24.68M8.91 19.09L3.32 19.38M14 14L2.12 10.82M7.05 12.14L2.06 14.68M7.05 12.14L4.00 7.44M14 14L10.82 2.12M12.14 7.05L7.44 4.00M12.14 7.05L14.68 2.06M14 14L22.70 5.30M19.09 8.91L19.38 3.32M19.09 8.91L24.68 8.62" stroke="#8cc6f0" stroke-width="3.2" stroke-linecap="round" fill="none"/>
<path d="M14 14L25.88 17.18M20.95 15.86L25.94 13.32M20.95 15.86L24.00 20.56M14 14L17.18 25.88M15.86 20.95L20.56 24.00M15.86 20.95L13.32 25.94M14 14L5.30 22.70M8.91 19.09L8.62 24.68M8.91 19.09L3.32 19.38M14 14L2.12 10.82M7.05 12.14L2.06 14.68M7.05 12.14L4.00 7.44M14 14L10.82 2.12M12.14 7.05L7.44 4.00M12.14 7.05L14.68 2.06M14 14L22.70 5.30M19.09 8.91L19.38 3.32M19.09 8.91L24.68 8.62" stroke="#c4e9fb" stroke-width="1.7" stroke-linecap="round" fill="none"/>
<circle cx="14" cy="14" r="2.2" fill="#b5bfc8"/></svg>
<div class="b" style="left:2833px;top:1408px;width:317px;height:64px;border:2px solid #242424;border-radius:32px;"></div>
<svg class="i" style="left:2853.2px;top:1424px" width="24" height="31" viewBox="0 0 25 31" preserveAspectRatio="none">
<path d="M11.0 1.0 C11.6 1.2 13.5 2.6 15.6 4.8 C18.3 7.6 19.3 10.6 19.2 13.4 C19.7 13.9 20.6 13.4 21.3 12.0 C21.6 11.4 22.2 11.5 22.5 12.2 C23.4 14.3 23.9 16.6 23.6 19.4 C23.1 24.5 18.7 29.2 12.6 29.3 C6.6 29.4 2.0 25.4 1.5 20.2 C1.2 17.0 2.1 14.3 3.4 12.6 C3.8 12.1 4.4 12.3 4.5 12.9 C4.7 14.0 5.2 15.0 6.0 15.3 C6.8 15.3 7.0 14.4 7.2 13.4 C7.7 10.2 9.0 8.0 10.2 6.4 C11.0 5.2 10.6 2.8 10.3 1.6 C10.2 1.2 10.6 0.9 11.0 1.0 Z" fill="url(#fg)"/>
<path d="M4.6 6.0 C5.2 7.3 4.8 9.2 3.5 10.6 C2.6 11.0 2.0 10.4 2.3 9.4 C2.8 7.9 3.7 6.6 4.6 6.0 Z" fill="#ee5b32"/>
</svg>
<div class="b" style="left:3001px;top:1425px;width:2px;height:30px;background:#2a2a2a;"></div>
<div class="b" style="left:1335px;top:1696px;width:1250px;height:116px;background:#0a0a0a;border:2px solid #262626;border-radius:14px;"></div>
<svg class="i" style="left:1365.5px;top:1712.6px" width="292" height="82" viewBox="0 0 292 82" fill="none" stroke="#2e2e2e" stroke-width="2" stroke-dasharray="6 4">
<path d="M213 4 H12 A8 8 0 0 0 4 12 V70 A8 8 0 0 0 12 78 H213"/><path d="M213 4 V78"/><path d="M213 4 H280 A8 8 0 0 1 288 12 V70 A8 8 0 0 1 280 78 H213"/></svg>
<svg class="i" style="left:1604px;top:1742px" width="24" height="24" viewBox="0 0 24 24" fill="none" stroke="#a1a1a1" stroke-width="1.8" stroke-linecap="round"><path d="M5.5 5.5 L18.5 18.5 M18.5 5.5 L5.5 18.5"/></svg>
<div class="b" style="left:1678px;top:1722px;width:4px;height:64px;background:#262626;"></div>
<div class="b" style="left:1705px;top:1716px;width:229px;height:76px;background:#171717;border:2px solid #262626;border-radius:11px;"></div>
<svg class="i" style="left:1732px;top:1742px" width="24" height="24" viewBox="0 0 24 24" fill="none" stroke="#fafafa" stroke-width="2" stroke-linecap="round" stroke-linejoin="round" ><path d="M12.586 2.586A2 2 0 0 0 11.172 2H4a2 2 0 0 0-2 2v7.172a2 2 0 0 0 .586 1.414l8.704 8.704a2.426 2.426 0 0 0 3.42 0l6.58-6.58a2.426 2.426 0 0 0 0-3.42z"/><circle cx="7.5" cy="7.5" r=".5" fill="currentColor"/></svg>
<div class="b" style="left:1956px;top:1716px;width:319px;height:76px;background:#171717;border:2px solid #262626;border-radius:11px;"></div>
<svg class="i" style="left:1983px;top:1742px" width="24" height="24" viewBox="0 0 24 24" fill="none" stroke="#fafafa" stroke-width="2" stroke-linecap="round" stroke-linejoin="round" ><path d="M21 8a2 2 0 0 0-1-1.73l-7-4a2 2 0 0 0-2 0l-7 4A2 2 0 0 0 3 8v8a2 2 0 0 0 1 1.73l7 4a2 2 0 0 0 2 0l7-4A2 2 0 0 0 21 16Z"/><path d="m3.3 7 8.7 5 8.7-5"/><path d="M12 22V12"/></svg>
<div class="b" style="left:2298px;top:1714px;width:253px;height:80px;background:#171717;border:2px solid #262626;border-radius:14px;box-shadow:0 0 0 2px #0f0f0f inset;"></div>
<svg class="i" style="left:2332px;top:1742px" width="24" height="24" viewBox="0 0 24 24" fill="none" stroke="#fafafa" stroke-width="2" stroke-linecap="round" stroke-linejoin="round" ><path d="M15 6v12a3 3 0 1 0 3-3H6a3 3 0 1 0 3 3V6a3 3 0 1 0-3 3h12a3 3 0 1 0-3-3"/></svg>
<svg class="i" style="left:512px;top:1870px" width="32" height="32" viewBox="0 0 24 24" fill="none" stroke="#fafafa" stroke-width="1.6" stroke-linecap="round" stroke-linejoin="round" ><path d="M6 16c5 0 7-8 12-8a4 4 0 0 1 0 8c-5 0-7-8-12-8a4 4 0 1 0 0 8"/></svg>
<svg class="i" style="left:646px;top:1870px" width="32" height="32" viewBox="0 0 24 24" fill="none" stroke="#fafafa" stroke-width="1.6" stroke-linecap="round" stroke-linejoin="round" ><rect width="20" height="8" x="2" y="2" rx="2" ry="2"/><rect width="20" height="8" x="2" y="14" rx="2" ry="2"/><line x1="6" x2="6.01" y1="6" y2="6"/><line x1="6" x2="6.01" y1="18" y2="18"/></svg>
<svg class="i" style="left:3278px;top:1860px" width="52" height="52" viewBox="-26 -26 52 52">
<path d="M16.97 -16.97 A24 24 0 1 0 16.97 16.97 L9.55 9.55 A13.5 13.5 0 1 1 9.55 -9.55 Z" fill="#2c2c2c"/>
<circle cx="0" cy="0" r="13.5" fill="#323232"/>
<path d="M-13.5 -0.8 A13.5 13.5 0 0 0 13.5 -0.8 Z" fill="#1b46b4"/>
<circle cx="0" cy="0.5" r="4" fill="#1e1e1e"/></svg>
<div class="tl">
<span class="t" style="left:70px;top:68px;font-size:29px;line-height:29px;-webkit-text-stroke:0.5px #fafafa;">P</span>
<span class="t" style="left:128px;top:67px;font-size:29px;line-height:29px;letter-spacing:1.45px;-webkit-text-stroke:1.3px #fafafa;">My Account</span>
<span class="t" style="left:96px;top:180px;font-size:29px;line-height:29px;letter-spacing:0.2px;-webkit-text-stroke:0.6px #fafafa;">Canisters</span>
<span class="t" style="left:96px;top:252px;font-size:29px;line-height:29px;letter-spacing:0.4px;-webkit-text-stroke:0.6px #fafafa;">Projects</span>
<span class="t" style="left:96px;top:324px;font-size:29px;line-height:29px;letter-spacing:0.45px;-webkit-text-stroke:0.6px #fafafa;">Settings</span>
<span class="t" style="left:96px;top:396px;font-size:29px;line-height:29px;letter-spacing:0.45px;-webkit-text-stroke:0.6px #fafafa;">Billing</span>
<span class="t" style="left:96px;top:1598px;font-size:25px;line-height:25px;letter-spacing:0.35px;-webkit-text-stroke:0.5px #fafafa;">Documentation</span>
<span class="t" style="left:96px;top:1662px;font-size:25px;line-height:25px;letter-spacing:0.4px;-webkit-text-stroke:0.5px #fafafa;">Support</span>
<span class="t" style="left:96px;top:1726px;font-size:25px;line-height:25px;letter-spacing:0.1px;-webkit-text-stroke:0.5px #fafafa;">Feedback</span>
<span class="t" style="left:62px;top:1832px;font-size:29px;line-height:29px;letter-spacing:-1.5px;-webkit-text-stroke:0.5px #fafafa;">Pa</span>
<span class="t" style="left:128px;top:1815px;font-size:29px;line-height:29px;letter-spacing:0.25px;-webkit-text-stroke:1.3px #fafafa;">Pashunya II</span>
<span class="t" style="left:128px;top:1850px;font-size:25px;line-height:25px;letter-spacing:0.4px;-webkit-text-stroke:0.5px #fafafa;">official.chorniy@gmail....</span>
<span class="t" style="left:628px;top:68px;font-size:29px;line-height:29px;letter-spacing:0.3px;-webkit-text-stroke:0.5px #fafafa;">Canisters</span>
<span class="t" style="left:762px;top:68px;font-size:29px;line-height:29px;letter-spacing:0.5px;color:#a1a1a1;-webkit-text-stroke:0.5px #a1a1a1;">(8)</span>
<span class="t" style="left:913px;top:70px;font-size:25px;line-height:25px;letter-spacing:0.25px;color:#a1a1a1;-webkit-text-stroke:0.5px #a1a1a1;">Search canisters...</span>
<span class="t" style="left:1332px;top:68px;font-size:25px;line-height:25px;letter-spacing:0.35px;-webkit-text-stroke:1.1px #fafafa;">Filter</span>
<span class="t" style="left:2696px;top:68px;font-size:25px;line-height:25px;letter-spacing:0.1px;-webkit-text-stroke:1.1px #fafafa;">Display</span>
<span class="t" style="left:2894px;top:68px;font-size:25px;line-height:25px;letter-spacing:0.05px;-webkit-text-stroke:1.1px #fafafa;">Summary</span>
<span class="t" style="left:3070px;top:68px;font-size:29px;line-height:29px;letter-spacing:0.4px;color:#171717;-webkit-text-stroke:0.9px #171717;">Add Canister</span>
<span class="t" style="left:530px;top:177px;font-size:29px;line-height:29px;letter-spacing:-0.05px;-webkit-text-stroke:1.3px #fafafa;">Canister Health</span>
<span class="t" style="left:1158px;top:431px;font-size:25px;line-height:25px;letter-spacing:0.4px;-webkit-text-stroke:0.5px #fafafa;">8/8 Healthy</span>
<span class="t" style="left:1486px;top:177px;font-size:29px;line-height:29px;letter-spacing:0.85px;-webkit-text-stroke:1.3px #fafafa;">Top-ups</span>
<span class="t" style="left:2014px;top:177px;font-size:29px;line-height:29px;letter-spacing:-0.85px;-webkit-text-stroke:1.3px #fafafa;">0.77 TC</span>
<span class="t" style="left:2120px;top:181px;font-size:25px;line-height:25px;letter-spacing:-0.7px;-webkit-text-stroke:1.2px #fafafa;">($1.02)</span>
<span class="t" style="left:2205px;top:177px;font-size:29px;line-height:29px;-webkit-text-stroke:1.3px #fafafa;">over 30 days</span>
<span class="t" style="left:2268px;top:272px;font-size:25px;line-height:25px;letter-spacing:-0.1px;color:#a1a1a1;-webkit-text-stroke:0.5px #a1a1a1;">0.8 TC</span>
<span class="t" style="left:2268px;top:347px;font-size:25px;line-height:25px;letter-spacing:-0.1px;color:#a1a1a1;-webkit-text-stroke:0.5px #a1a1a1;">0.6 TC</span>
<span class="t" style="left:2268px;top:422px;font-size:25px;line-height:25px;letter-spacing:0.1px;color:#a1a1a1;-webkit-text-stroke:0.5px #a1a1a1;">0.4 TC</span>
<span class="t" style="left:2268px;top:497px;font-size:25px;line-height:25px;letter-spacing:-0.1px;color:#a1a1a1;-webkit-text-stroke:0.5px #a1a1a1;">0.2 TC</span>
<span class="t" style="left:2268px;top:572px;font-size:25px;line-height:25px;letter-spacing:-0.05px;color:#a1a1a1;-webkit-text-stroke:0.5px #a1a1a1;">0 TC</span>
<span class="t" style="left:1544px;top:607px;font-size:25px;line-height:25px;letter-spacing:0.2px;color:#a1a1a1;-webkit-text-stroke:0.5px #a1a1a1;">Feb 20</span>
<span class="t" style="left:1638px;top:607px;font-size:25px;line-height:25px;letter-spacing:-0.1px;color:#a1a1a1;-webkit-text-stroke:0.5px #a1a1a1;">Feb 24</span>
<span class="t" style="left:1731px;top:607px;font-size:25px;line-height:25px;letter-spacing:0.1px;color:#a1a1a1;-webkit-text-stroke:0.5px #a1a1a1;">Feb 28</span>
<span class="t" style="left:1823px;top:607px;font-size:25px;line-height:25px;letter-spacing:0.45px;color:#a1a1a1;-webkit-text-stroke:0.5px #a1a1a1;">Mar 04</span>
<span class="t" style="left:1917px;top:607px;font-size:25px;line-height:25px;letter-spacing:0.65px;color:#a1a1a1;-webkit-text-stroke:0.5px #a1a1a1;">Mar 08</span>
<span class="t" style="left:2014px;top:607px;font-size:25px;line-height:25px;letter-spacing:-0.6px;color:#a1a1a1;-webkit-text-stroke:0.5px #a1a1a1;">Mar 12</span>
<span class="t" style="left:2107px;top:607px;font-size:25px;line-height:25px;letter-spacing:-0.35px;color:#a1a1a1;-webkit-text-stroke:0.5px #a1a1a1;">Mar 16</span>
<span class="t" style="left:2198px;top:607px;font-size:25px;line-height:25px;letter-spacing:0.6px;color:#a1a1a1;-webkit-text-stroke:0.5px #a1a1a1;">Mar 20</span>
<span class="t" style="left:2439px;top:177px;font-size:29px;line-height:29px;letter-spacing:0.15px;-webkit-text-stroke:1.3px #fafafa;">Cycles Burn</span>
<span class="t" style="left:3023px;top:177px;font-size:29px;line-height:29px;letter-spacing:-0.3px;-webkit-text-stroke:1.3px #fafafa;">488.15 TC over 30 days</span>
<span class="t" style="left:3221px;top:272px;font-size:25px;line-height:25px;letter-spacing:0.35px;color:#a1a1a1;-webkit-text-stroke:0.5px #a1a1a1;">24 TC</span>
<span class="t" style="left:3221px;top:347px;font-size:25px;line-height:25px;letter-spacing:-0.95px;color:#a1a1a1;-webkit-text-stroke:0.5px #a1a1a1;">18 TC</span>
<span class="t" style="left:3221px;top:422px;font-size:25px;line-height:25px;letter-spacing:-0.95px;color:#a1a1a1;-webkit-text-stroke:0.5px #a1a1a1;">12 TC</span>
<span class="t" style="left:3221px;top:497px;font-size:25px;line-height:25px;letter-spacing:0.15px;color:#a1a1a1;-webkit-text-stroke:0.5px #a1a1a1;">6 TC</span>
<span class="t" style="left:3222px;top:572px;font-size:25px;line-height:25px;letter-spacing:-0.2px;color:#a1a1a1;-webkit-text-stroke:0.5px #a1a1a1;">0 TC</span>
<span class="t" style="left:2498px;top:607px;font-size:25px;line-height:25px;letter-spacing:0.2px;color:#a1a1a1;-webkit-text-stroke:0.5px #a1a1a1;">Feb 20</span>
<span class="t" style="left:2592px;top:607px;font-size:25px;line-height:25px;letter-spacing:-0.1px;color:#a1a1a1;-webkit-text-stroke:0.5px #a1a1a1;">Feb 24</span>
<span class="t" style="left:2685px;top:607px;font-size:25px;line-height:25px;letter-spacing:0.1px;color:#a1a1a1;-webkit-text-stroke:0.5px #a1a1a1;">Feb 28</span>
<span class="t" style="left:2777px;top:607px;font-size:25px;line-height:25px;letter-spacing:0.45px;color:#a1a1a1;-webkit-text-stroke:0.5px #a1a1a1;">Mar 04</span>
<span class="t" style="left:2871px;top:607px;font-size:25px;line-height:25px;letter-spacing:0.65px;color:#a1a1a1;-webkit-text-stroke:0.5px #a1a1a1;">Mar 08</span>
<span class="t" style="left:2968px;top:607px;font-size:25px;line-height:25px;letter-spacing:-0.6px;color:#a1a1a1;-webkit-text-stroke:0.5px #a1a1a1;">Mar 12</span>
<span class="t" style="left:3061px;top:607px;font-size:25px;line-height:25px;letter-spacing:-0.35px;color:#a1a1a1;-webkit-text-stroke:0.5px #a1a1a1;">Mar 16</span>
<span class="t" style="left:3152px;top:607px;font-size:25px;line-height:25px;letter-spacing:0.6px;color:#a1a1a1;-webkit-text-stroke:0.5px #a1a1a1;">Mar 20</span>
<span class="t m" style="left:594px;top:756px;font-size:24px;line-height:24px;letter-spacing:1.25px;color:#9b9b9b;-webkit-text-stroke:0.4px #9b9b9b;">7sppf</span>
<span class="t" style="left:728px;top:754px;font-size:29px;line-height:29px;letter-spacing:0.85px;-webkit-text-stroke:0.9px #fafafa;">7sppf-6aaaa-aaaaq-aaata-cai</span>
<span class="t" style="left:1958px;top:755px;font-size:25px;line-height:25px;letter-spacing:-0.35px;-webkit-text-stroke:0.5px #fafafa;">sns</span>
<span class="t" style="left:2081px;top:755px;font-size:25px;line-height:25px;letter-spacing:0.3px;-webkit-text-stroke:0.5px #fafafa;">swap</span>
<span class="t" style="left:2249px;top:755px;font-size:25px;line-height:25px;letter-spacing:0.25px;-webkit-text-stroke:0.5px #fafafa;">Kinic</span>
<span class="t" style="left:2409px;top:755px;font-size:25px;line-height:25px;letter-spacing:-0.9px;-webkit-text-stroke:0.5px #fafafa;">63 TC @ 21 TC</span>
<span class="t" style="left:2677px;top:755px;font-size:25px;line-height:25px;letter-spacing:1.45px;-webkit-text-stroke:0.5px #fafafa;">2034</span>
<span class="t" style="left:2841px;top:755px;font-size:25px;line-height:25px;letter-spacing:0.3px;-webkit-text-stroke:0.5px #fafafa;">64.02B Cycles</span>
<span class="t" style="left:3040px;top:755px;font-size:25px;line-height:25px;letter-spacing:-0.7px;-webkit-text-stroke:0.5px #fafafa;">2.51 TC</span>
<span class="t" style="left:3164px;top:755px;font-size:25px;line-height:25px;letter-spacing:0.45px;-webkit-text-stroke:0.5px #fafafa;">288 TC</span>
<span class="t" style="left:3261px;top:755px;font-size:25px;line-height:25px;letter-spacing:0.05px;-webkit-text-stroke:0.5px #fafafa;">32MB</span>
<span class="t m" style="left:594px;top:852px;font-size:24px;line-height:24px;letter-spacing:1px;color:#9b9b9b;-webkit-text-stroke:0.4px #9b9b9b;">7vojr</span>
<span class="t" style="left:728px;top:850px;font-size:29px;line-height:29px;letter-spacing:0.9px;-webkit-text-stroke:0.9px #fafafa;">7vojr-tyaaa-aaaaq-aaatq-cai</span>
<span class="t" style="left:2002px;top:851px;font-size:25px;line-height:25px;letter-spacing:-0.2px;-webkit-text-stroke:0.5px #fafafa;">sns</span>
<span class="t" style="left:2124px;top:851px;font-size:25px;line-height:25px;letter-spacing:0.2px;-webkit-text-stroke:0.5px #fafafa;">index</span>
<span class="t" style="left:2294px;top:851px;font-size:25px;line-height:25px;letter-spacing:0.3px;-webkit-text-stroke:0.5px #fafafa;">Kinic</span>
<span class="t" style="left:2454px;top:851px;font-size:25px;line-height:25px;letter-spacing:-0.9px;-webkit-text-stroke:0.5px #fafafa;">63 TC @ 21 TC</span>
<span class="t" style="left:2722px;top:851px;font-size:25px;line-height:25px;letter-spacing:0.05px;-webkit-text-stroke:0.5px #fafafa;">Apr 7</span>
<span class="t" style="left:2887px;top:851px;font-size:25px;line-height:25px;letter-spacing:-0.2px;-webkit-text-stroke:0.5px #fafafa;">3.05 TC</span>
<span class="t" style="left:3009px;top:851px;font-size:25px;line-height:25px;letter-spacing:-0.2px;-webkit-text-stroke:0.5px #fafafa;">102.06 TC</span>
<span class="t" style="left:3171px;top:851px;font-size:25px;line-height:25px;letter-spacing:0.4px;-webkit-text-stroke:0.5px #fafafa;">60 TC</span>
<span class="t" style="left:3260px;top:851px;font-size:25px;line-height:25px;letter-spacing:0.6px;-webkit-text-stroke:0.5px #fafafa;">60MB</span>
<span class="t m" style="left:594px;top:948px;font-size:24px;line-height:24px;letter-spacing:1.25px;color:#9b9b9b;-webkit-text-stroke:0.4px #9b9b9b;">6yan7</span>
<span class="t" style="left:728px;top:946px;font-size:29px;line-height:29px;letter-spacing:0.85px;-webkit-text-stroke:0.9px #fafafa;">6yan7-4qaaa-aaaaq-aaaua-cai</span>
<span class="t" style="left:1972px;top:947px;font-size:25px;line-height:25px;letter-spacing:-0.3px;-webkit-text-stroke:0.5px #fafafa;">sns</span>
<span class="t" style="left:2094px;top:947px;font-size:25px;line-height:25px;letter-spacing:0.45px;-webkit-text-stroke:0.5px #fafafa;">archive</span>
<span class="t" style="left:2285px;top:947px;font-size:25px;line-height:25px;letter-spacing:0.25px;-webkit-text-stroke:0.5px #fafafa;">Kinic</span>
<span class="t" style="left:2445px;top:947px;font-size:25px;line-height:25px;letter-spacing:-1.25px;-webkit-text-stroke:0.5px #fafafa;">2 TC @ 1 TC</span>
<span class="t" style="left:2683px;top:947px;font-size:25px;line-height:25px;letter-spacing:0.25px;-webkit-text-stroke:0.5px #fafafa;">2778</span>
<span class="t" style="left:2844px;top:947px;font-size:25px;line-height:25px;letter-spacing:-0.6px;-webkit-text-stroke:0.5px #fafafa;">&lt;.01 TC</span>
<span class="t" style="left:2964px;top:947px;font-size:25px;line-height:25px;letter-spacing:-0.1px;-webkit-text-stroke:0.5px #fafafa;">27.86B Cycles</span>
<span class="t" style="left:3165px;top:947px;font-size:25px;line-height:25px;letter-spacing:0.15px;-webkit-text-stroke:0.5px #fafafa;">255 TC</span>
<span class="t" style="left:3260px;top:947px;font-size:25px;line-height:25px;letter-spacing:0.4px;-webkit-text-stroke:0.5px #fafafa;">28MB</span>
<span class="t m" style="left:594px;top:1044px;font-size:24px;line-height:24px;letter-spacing:1.5px;color:#9b9b9b;-webkit-text-stroke:0.4px #9b9b9b;">67bll</span>
<span class="t" style="left:728px;top:1042px;font-size:29px;line-height:29px;letter-spacing:0.85px;-webkit-text-stroke:0.9px #fafafa;">67bll-riaaa-aaaaq-aaauq-cai</span>
<span class="t" style="left:1968px;top:1043px;font-size:25px;line-height:25px;letter-spacing:-0.3px;-webkit-text-stroke:0.5px #fafafa;">sns</span>
<span class="t" style="left:2091px;top:1043px;font-size:25px;line-height:25px;letter-spacing:0.4px;-webkit-text-stroke:0.5px #fafafa;">root</span>
<span class="t" style="left:2244px;top:1043px;font-size:25px;line-height:25px;letter-spacing:-1.5px;-webkit-text-stroke:0.5px #fafafa;">YRAL</span>
<span class="t" style="left:2409px;top:1043px;font-size:25px;line-height:25px;letter-spacing:-1.2px;-webkit-text-stroke:0.5px #fafafa;">1.8 TC @ 1.8 TC</span>
<span class="t" style="left:2685px;top:1043px;font-size:25px;line-height:25px;letter-spacing:0.6px;-webkit-text-stroke:0.5px #fafafa;">Dec 2026</span>
<span class="t" style="left:2901px;top:1043px;font-size:25px;line-height:25px;letter-spacing:0.15px;-webkit-text-stroke:0.5px #fafafa;">0.29 TC</span>
<span class="t" style="left:3024px;top:1043px;font-size:25px;line-height:25px;letter-spacing:-0.35px;-webkit-text-stroke:0.5px #fafafa;">19.24 TC</span>
<span class="t" style="left:3167px;top:1043px;font-size:25px;line-height:25px;letter-spacing:-0.65px;-webkit-text-stroke:0.5px #fafafa;">401 TC</span>
<span class="t" style="left:3255px;top:1043px;font-size:25px;line-height:25px;letter-spacing:-0.2px;-webkit-text-stroke:0.5px #fafafa;">104MB</span>
<span class="t m" style="left:594px;top:1140px;font-size:24px;line-height:24px;letter-spacing:1px;color:#9b9b9b;-webkit-text-stroke:0.4px #9b9b9b;">6wcax</span>
<span class="t" style="left:728px;top:1138px;font-size:29px;line-height:29px;letter-spacing:0.85px;-webkit-text-stroke:0.9px #fafafa;">6wcax-haaaa-aaaaq-aaava-cai</span>
<span class="t" style="left:1916px;top:1139px;font-size:25px;line-height:25px;letter-spacing:-0.3px;-webkit-text-stroke:0.5px #fafafa;">sns</span>
<span class="t" style="left:2039px;top:1139px;font-size:25px;line-height:25px;letter-spacing:0.45px;-webkit-text-stroke:0.5px #fafafa;">governance</span>
<span class="t" style="left:2283px;top:1139px;font-size:25px;line-height:25px;letter-spacing:-1.5px;-webkit-text-stroke:0.5px #fafafa;">YRAL</span>
<span class="t" style="left:2447px;top:1139px;font-size:25px;line-height:25px;letter-spacing:-1.2px;-webkit-text-stroke:0.5px #fafafa;">1.8 TC @ 1.8 TC</span>
<span class="t" style="left:2723px;top:1139px;font-size:25px;line-height:25px;letter-spacing:0.5px;-webkit-text-stroke:0.5px #fafafa;">Mar 25</span>
<span class="t" style="left:2906px;top:1139px;font-size:25px;line-height:25px;letter-spacing:-1.4px;-webkit-text-stroke:0.5px #fafafa;">1.51 TC</span>
<span class="t" style="left:3020px;top:1139px;font-size:25px;line-height:25px;letter-spacing:-1.35px;-webkit-text-stroke:0.5px #fafafa;">211.31 TC</span>
<span class="t" style="left:3171px;top:1139px;font-size:25px;line-height:25px;letter-spacing:0.25px;-webkit-text-stroke:0.5px #fafafa;">29 TC</span>
<span class="t" style="left:3254px;top:1139px;font-size:25px;line-height:25px;letter-spacing:0.55px;-webkit-text-stroke:0.5px #fafafa;">388MB</span>
<span class="t m" style="left:594px;top:1236px;font-size:24px;line-height:24px;letter-spacing:1.5px;color:#9b9b9b;-webkit-text-stroke:0.4px #9b9b9b;">6rdgd</span>
<span class="t" style="left:728px;top:1234px;font-size:29px;line-height:29px;letter-spacing:0.95px;-webkit-text-stroke:0.9px #fafafa;">6rdgd-kyaaa-aaaaq-aaavq-cai</span>
<span class="t" style="left:1970px;top:1235px;font-size:25px;line-height:25px;letter-spacing:-0.3px;-webkit-text-stroke:0.5px #fafafa;">sns</span>
<span class="t" style="left:2092px;top:1235px;font-size:25px;line-height:25px;letter-spacing:0.45px;-webkit-text-stroke:0.5px #fafafa;">ledger</span>
<span class="t" style="left:2273px;top:1235px;font-size:25px;line-height:25px;letter-spacing:-1.5px;-webkit-text-stroke:0.5px #fafafa;">YRAL</span>
<span class="t" style="left:2439px;top:1235px;font-size:25px;line-height:25px;letter-spacing:-0.7px;-webkit-text-stroke:0.5px #fafafa;">3.23 TC @ 1.23 TC</span>
<span class="t" style="left:2749px;top:1235px;font-size:25px;line-height:25px;letter-spacing:0.5px;-webkit-text-stroke:0.5px #fafafa;">Jun 6</span>
<span class="t" style="left:2916px;top:1235px;font-size:25px;line-height:25px;letter-spacing:-0.55px;-webkit-text-stroke:0.5px #fafafa;">1.82 TC</span>
<span class="t" style="left:3034px;top:1235px;font-size:25px;line-height:25px;letter-spacing:0.2px;-webkit-text-stroke:0.5px #fafafa;">54.6 TC</span>
<span class="t" style="left:3165px;top:1235px;font-size:25px;line-height:25px;letter-spacing:-0.3px;-webkit-text-stroke:0.5px #fafafa;">140 TC</span>
<span class="t" style="left:3260px;top:1235px;font-size:25px;line-height:25px;letter-spacing:0.4px;-webkit-text-stroke:0.5px #fafafa;">53MB</span>
<span class="t m" style="left:594px;top:1332px;font-size:24px;line-height:24px;letter-spacing:1.25px;color:#9b9b9b;-webkit-text-stroke:0.4px #9b9b9b;">6eexo</span>
<span class="t" style="left:728px;top:1330px;font-size:29px;line-height:29px;letter-spacing:0.85px;-webkit-text-stroke:0.9px #fafafa;">6eexo-lqaaa-aaaaq-aaawa-cai</span>
<span class="t" style="left:1890px;top:1331px;font-size:25px;line-height:25px;letter-spacing:-0.3px;-webkit-text-stroke:0.5px #fafafa;">sns</span>
<span class="t" style="left:2014px;top:1331px;font-size:25px;line-height:25px;letter-spacing:0.3px;-webkit-text-stroke:0.5px #fafafa;">swap</span>
<span class="t" style="left:2182px;top:1331px;font-size:25px;line-height:25px;letter-spacing:-1.5px;-webkit-text-stroke:0.5px #fafafa;">YRAL</span>
<span class="t" style="left:2345px;top:1331px;font-size:25px;line-height:25px;letter-spacing:-1.15px;-webkit-text-stroke:0.5px #fafafa;">1.8 TC @ 1.8 TC</span>
<span class="t" style="left:2622px;top:1331px;font-size:25px;line-height:25px;letter-spacing:0.6px;-webkit-text-stroke:0.5px #fafafa;">Dec 2026</span>
<span class="t" style="left:2836px;top:1331px;font-size:25px;line-height:25px;letter-spacing:0.25px;-webkit-text-stroke:0.5px #fafafa;">64.72B Cycles</span>
<span class="t" style="left:3034px;top:1331px;font-size:25px;line-height:25px;letter-spacing:0.25px;-webkit-text-stroke:0.5px #fafafa;">2.95 TC</span>
<span class="t" style="left:3174px;top:1331px;font-size:25px;line-height:25px;letter-spacing:-0.95px;-webkit-text-stroke:0.5px #fafafa;">61 TC</span>
<span class="t" style="left:3261px;top:1331px;font-size:25px;line-height:25px;letter-spacing:0.05px;-webkit-text-stroke:0.5px #fafafa;">32MB</span>
<span class="t m" style="left:594px;top:1428px;font-size:24px;line-height:24px;letter-spacing:1.25px;color:#9b9b9b;-webkit-text-stroke:0.4px #9b9b9b;">6dfr2</span>
<span class="t" style="left:728px;top:1426px;font-size:29px;line-height:29px;letter-spacing:1.05px;-webkit-text-stroke:0.9px #fafafa;">6dfr2-giaaa-aaaaq-aaawq-cai</span>
<span class="t" style="left:1970px;top:1427px;font-size:25px;line-height:25px;letter-spacing:-0.3px;-webkit-text-stroke:0.5px #fafafa;">sns</span>
<span class="t" style="left:2092px;top:1427px;font-size:25px;line-height:25px;letter-spacing:0.2px;-webkit-text-stroke:0.5px #fafafa;">index</span>
<span class="t" style="left:2263px;top:1427px;font-size:25px;line-height:25px;letter-spacing:-1.5px;-webkit-text-stroke:0.5px #fafafa;">YRAL</span>
<span class="t" style="left:2429px;top:1427px;font-size:25px;line-height:25px;letter-spacing:-0.95px;-webkit-text-stroke:0.5px #fafafa;">3.9 TC @ 1.9 TC</span>
<span class="t" style="left:2708px;top:1427px;font-size:25px;line-height:25px;letter-spacing:0.35px;-webkit-text-stroke:0.5px #fafafa;">May 27</span>
<span class="t" style="left:2896px;top:1427px;font-size:25px;line-height:25px;letter-spacing:0.05px;-webkit-text-stroke:0.5px #fafafa;">3.08 TC</span>
<span class="t" style="left:3019px;top:1427px;font-size:25px;line-height:25px;letter-spacing:0.4px;-webkit-text-stroke:0.5px #fafafa;">95.46 TC</span>
<span class="t" style="left:3167px;top:1427px;font-size:25px;line-height:25px;letter-spacing:-0.75px;-webkit-text-stroke:0.5px #fafafa;">216 TC</span>
<span class="t" style="left:3260px;top:1427px;font-size:25px;line-height:25px;letter-spacing:0.4px;-webkit-text-stroke:0.5px #fafafa;">92MB</span>
<span class="t" style="left:1395px;top:1737px;font-size:33px;line-height:33px;letter-spacing:1.05px;-webkit-text-stroke:0.9px #fafafa;">3 selected</span>
<span class="t" style="left:1781px;top:1740px;font-size:29px;line-height:29px;letter-spacing:0.5px;-webkit-text-stroke:1.3px #fafafa;">Add tags</span>
<span class="t" style="left:2032px;top:1740px;font-size:29px;line-height:29px;letter-spacing:0.65px;-webkit-text-stroke:1.3px #fafafa;">Move to project</span>
<span class="t" style="left:2380px;top:1740px;font-size:29px;line-height:29px;letter-spacing:0.65px;-webkit-text-stroke:1.3px #fafafa;">Command</span>
<span class="t" style="left:553px;top:1873px;font-size:25px;line-height:25px;letter-spacing:-0.4px;-webkit-text-stroke:0.5px #fafafa;">0 ICP</span>
<span class="t" style="left:686px;top:1873px;font-size:25px;line-height:25px;letter-spacing:0.1px;-webkit-text-stroke:0.5px #fafafa;">Last Monitor Mar 20 11:00PM</span>
<span class="t" style="left:1025px;top:1873px;font-size:25px;line-height:25px;color:#3a3a3a;">/</span>
<span class="t" style="left:1040px;top:1873px;font-size:25px;line-height:25px;letter-spacing:0.35px;-webkit-text-stroke:0.5px #fafafa;">Next Monitor about 6 hours</span>
<span class="t" style="left:2746px;top:1873px;font-size:25px;line-height:25px;letter-spacing:-0.3px;-webkit-text-stroke:0.5px #fafafa;">$1.417 Per TC (0.24 ICP)</span>
<span class="t" style="left:3056px;top:1873px;font-size:25px;line-height:25px;letter-spacing:0.35px;-webkit-text-stroke:0.5px #fafafa;">Terms of Service</span>
</div>
</body></html>
